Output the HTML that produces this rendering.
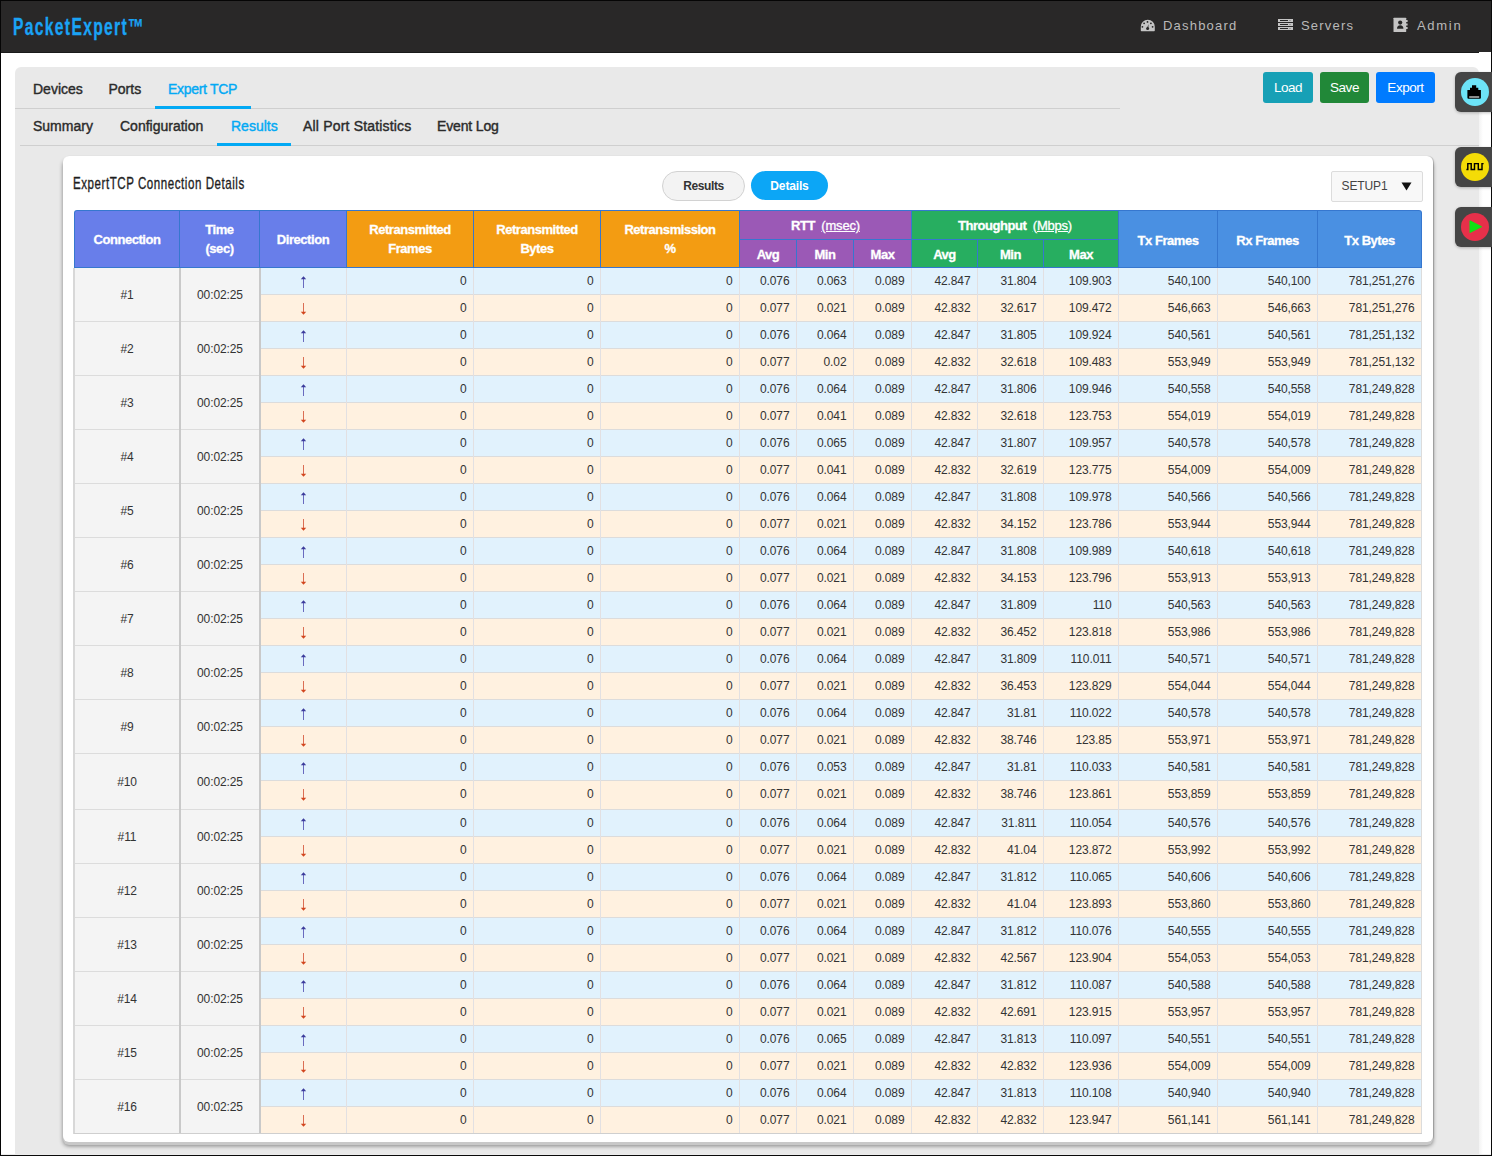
<!DOCTYPE html><html><head><meta charset="utf-8"><style>
html,body{margin:0;padding:0;}
body{width:1492px;height:1156px;overflow:hidden;position:relative;background:#fff;font-family:"Liberation Sans",sans-serif;}
body div{position:absolute;}
</style></head><body>
<div style="left:0px;top:0px;width:1492px;height:52px;background:#292828;"></div>
<div style="left:0px;top:52px;width:1492px;height:1px;background:#1a1a1a;"></div>
<div style="top:12.03px;font-size:23px;line-height:30px;color:#1aa3f5;font-weight:700;letter-spacing:1.95px;white-space:nowrap;left:13px;transform:scaleX(0.68);transform-origin:0 0;-webkit-text-stroke:0.3px currentColor;">PacketExpert™</div>
<div style="top:17.00px;font-size:13px;line-height:17px;color:#b9b9b9;font-weight:400;letter-spacing:1.2px;white-space:nowrap;left:1163px;">Dashboard</div>
<div style="top:17.00px;font-size:13px;line-height:17px;color:#b9b9b9;font-weight:400;letter-spacing:1.2px;white-space:nowrap;left:1301px;">Servers</div>
<div style="top:17.00px;font-size:13px;line-height:17px;color:#b9b9b9;font-weight:400;letter-spacing:1.7px;white-space:nowrap;left:1417px;">Admin</div>
<svg style="position:absolute;left:1136px;top:14px" width="24" height="24" viewBox="0 0 24 24">
<path d="M4.8 12.8 A7 7 0 0 1 18.8 12.8 V16.6 Q18.8 17.3 18.1 17.3 H5.5 Q4.8 17.3 4.8 16.6 Z" fill="#c4c4c4"/>
<g fill="#262626"><circle cx="11.5" cy="7.9" r="0.9"/><circle cx="8.1" cy="9.3" r="0.9"/><circle cx="14.9" cy="9.3" r="0.9"/><circle cx="6.4" cy="12.8" r="0.9"/><circle cx="16.6" cy="12.8" r="0.9"/>
<path d="M11.0 14.3 L12.6 10.0 L12.3 14.5 Z"/><circle cx="11.6" cy="14.5" r="1.5"/></g>
</svg>
<svg style="position:absolute;left:1278px;top:19px" width="15" height="11" viewBox="0 0 15 11">
<g fill="#c4c4c4"><rect x="0" y="0" width="15" height="3"/><rect x="0" y="4" width="15" height="3"/><rect x="0" y="8" width="15" height="3"/></g>
<g fill="#262626"><rect x="2" y="1" width="8" height="1"/><rect x="2" y="5" width="8" height="1"/><rect x="2" y="9" width="8" height="1"/>
<rect x="11.5" y="1" width="1" height="1" opacity=".5"/><rect x="11.5" y="5" width="1" height="1" opacity=".5"/><rect x="11.5" y="9" width="1" height="1" opacity=".5"/></g>
</svg>
<svg style="position:absolute;left:1393px;top:17px" width="16" height="16" viewBox="0 0 16 16">
<rect x="0.5" y="0.7" width="12.7" height="14.3" rx="0.6" fill="#c4c4c4"/>
<g fill="#c4c4c4"><rect x="13" y="3" width="1.6" height="2"/><rect x="13" y="6.5" width="1.6" height="2"/><rect x="13" y="10" width="1.6" height="2"/></g>
<circle cx="7.2" cy="5.6" r="2.1" fill="#262626"/><path d="M4 11.8 Q4 8.3 7.2 8.3 Q10.4 8.3 10.4 11.8 Z" fill="#262626"/>
</svg>
<div style="left:15px;top:67px;width:1464px;height:1200px;background:#e9e9e9;border-radius:6px 6px 0 0;"></div>
<div style="left:15px;top:108px;width:1105px;height:1px;background:#cfcfcf;"></div>
<div style="left:20px;top:145px;width:1459px;height:1px;background:#cfcfcf;"></div>
<div style="top:80.15px;font-size:14px;line-height:18px;color:#2b2b2b;font-weight:400;letter-spacing:0px;white-space:nowrap;left:33px;-webkit-text-stroke:0.4px currentColor;">Devices</div>
<div style="top:80.15px;font-size:14px;line-height:18px;color:#2b2b2b;font-weight:400;letter-spacing:0px;white-space:nowrap;left:108.5px;-webkit-text-stroke:0.4px currentColor;">Ports</div>
<div style="top:80.15px;font-size:14px;line-height:18px;color:#03a9f4;font-weight:400;letter-spacing:-0.3px;white-space:nowrap;left:168px;-webkit-text-stroke:0.4px currentColor;">Expert TCP</div>
<div style="left:155px;top:106px;width:96px;height:3px;background:#03a9f4;"></div>
<div style="top:117.15px;font-size:14px;line-height:18px;color:#2b2b2b;font-weight:400;letter-spacing:0px;white-space:nowrap;left:33px;-webkit-text-stroke:0.4px currentColor;">Summary</div>
<div style="top:117.15px;font-size:14px;line-height:18px;color:#2b2b2b;font-weight:400;letter-spacing:0px;white-space:nowrap;left:120px;-webkit-text-stroke:0.4px currentColor;">Configuration</div>
<div style="top:117.15px;font-size:14px;line-height:18px;color:#03a9f4;font-weight:400;letter-spacing:0px;white-space:nowrap;left:231px;-webkit-text-stroke:0.4px currentColor;">Results</div>
<div style="top:117.15px;font-size:14px;line-height:18px;color:#2b2b2b;font-weight:400;letter-spacing:0.18px;white-space:nowrap;left:303px;-webkit-text-stroke:0.4px currentColor;">All Port Statistics</div>
<div style="top:117.15px;font-size:14px;line-height:18px;color:#2b2b2b;font-weight:400;letter-spacing:-0.15px;white-space:nowrap;left:437px;-webkit-text-stroke:0.4px currentColor;">Event Log</div>
<div style="left:217px;top:143px;width:74px;height:3px;background:#03a9f4;"></div>
<div style="left:1263px;top:72px;width:50px;height:31px;background:#17a0b6;border-radius:3px;"></div>
<div style="left:1320px;top:72px;width:49px;height:31px;background:#218838;border-radius:3px;"></div>
<div style="left:1376px;top:72px;width:59px;height:31px;background:#007bff;border-radius:3px;"></div>
<div style="top:78.82px;font-size:13.5px;line-height:18px;color:#fff;font-weight:400;letter-spacing:-0.45px;white-space:nowrap;left:888px;width:800px;text-align:center;">Load</div>
<div style="top:78.82px;font-size:13.5px;line-height:18px;color:#fff;font-weight:400;letter-spacing:-0.45px;white-space:nowrap;left:944.5px;width:800px;text-align:center;">Save</div>
<div style="top:78.82px;font-size:13.5px;line-height:18px;color:#fff;font-weight:400;letter-spacing:-0.45px;white-space:nowrap;left:1005.5px;width:800px;text-align:center;">Export</div>
<div style="left:1479px;top:52px;width:12px;height:1104px;background:#ffffff;"></div>
<div style="left:1479px;top:75px;width:4px;height:1081px;background:linear-gradient(to right,#f3f3f3,#fff);"></div>
<div style="left:1491px;top:0px;width:1px;height:1156px;background:#0a0a0a;"></div>
<div style="left:0px;top:0px;width:1px;height:1156px;background:#050505;"></div>
<div style="left:1px;top:1154px;width:1490px;height:1px;background:#ececec;"></div>
<div style="left:0px;top:1155px;width:1492px;height:1px;background:#0a0a0a;"></div>
<div style="left:0px;top:0px;width:1492px;height:1px;background:#050505;"></div>
<div style="left:1455px;top:72px;width:40px;height:40px;background:#454545;border-radius:6px 0 0 6px;box-shadow:0 1px 3px rgba(0,0,0,.25);"></div>
<div style="left:1461px;top:78px;width:28px;height:28px;border-radius:50%;background:#6de3f7;"></div>
<svg style="position:absolute;left:1467px;top:85px" width="14" height="14" viewBox="0 0 14 14"><path d="M5 0.3 H9.2 V2.8 H11.3 V5.1 H13.9 V12.8 Q13.9 13.8 12.9 13.8 H1.4 Q0.4 13.8 0.4 12.8 V5.1 H3 V2.8 H5 Z" fill="#000"/><rect x="2.2" y="11" width="10" height="2" fill="#8a8a8a"/></svg>
<div style="left:1455px;top:147px;width:40px;height:40px;background:#454545;border-radius:6px 0 0 6px;box-shadow:0 1px 3px rgba(0,0,0,.25);"></div>
<div style="left:1461px;top:153px;width:28px;height:28px;border-radius:50%;background:#f4dc07;"></div>
<svg style="position:absolute;left:1466px;top:160px" width="18" height="12" viewBox="0 0 18 12"><path d="M0.4 9.4 H1.8 V3.6 H5.2 V9.4 H8.5 V3.6 H12.3 V9.4 H16 V3.6 H17.6" stroke="#000" stroke-width="1.45" fill="none" stroke-linejoin="miter"/></svg>
<div style="left:1455px;top:207px;width:40px;height:40px;background:#454545;border-radius:6px 0 0 6px;box-shadow:0 1px 3px rgba(0,0,0,.25);"></div>
<div style="left:1461px;top:213px;width:28px;height:28px;border-radius:50%;background:#e6304a;"></div>
<svg style="position:absolute;left:1468px;top:219px" width="16" height="16" viewBox="0 0 16 16"><path d="M1.5 2.2 Q1.5 1.1 2.5 1.6 L13.6 7.2 Q14.4 7.7 13.6 8.2 L2.5 13.8 Q1.5 14.3 1.5 13.2 Z" fill="#0fe014"/></svg>
<div style="left:63px;top:156px;width:1370px;height:986px;background:#fff;border-radius:6px;box-shadow:0 3px 0 0 #c8c8c8, 0 4px 4px 0 rgba(0,0,0,.45), 1px 0 1px rgba(0,0,0,.18);"></div>
<div style="top:172.61px;font-size:17px;line-height:22px;color:#1e1e1e;font-weight:400;letter-spacing:0.8px;white-space:nowrap;left:73px;transform:scaleX(0.68);transform-origin:0 0;-webkit-text-stroke:0.35px currentColor;">ExpertTCP Connection Details</div>
<div style="left:662px;top:171px;width:81px;height:28px;background:#f3f3f3;border:1px solid #d2d2d2;border-radius:15px;"></div>
<div style="left:751px;top:171px;width:77px;height:29px;background:#0ca6f6;border-radius:15px;"></div>
<div style="top:177.84px;font-size:12px;line-height:16px;color:#333;font-weight:700;letter-spacing:-0.4px;white-space:nowrap;left:303.5px;width:800px;text-align:center;">Results</div>
<div style="top:177.84px;font-size:12px;line-height:16px;color:#fff;font-weight:700;letter-spacing:-0.15px;white-space:nowrap;left:389.5px;width:800px;text-align:center;">Details</div>
<div style="left:1331px;top:171px;width:90px;height:29px;background:#f8f8f8;border:1px solid #dcdcdc;border-radius:2px;"></div>
<div style="top:178.34px;font-size:12px;line-height:16px;color:#444;font-weight:400;letter-spacing:-0.1px;white-space:nowrap;left:1341.5px;">SETUP1</div>
<svg style="position:absolute;left:1401px;top:182px" width="11" height="9" viewBox="0 0 11 9"><path d="M0.5 0.5 H10.5 L5.5 8.5 Z" fill="#111"/></svg>
<div style="left:74px;top:210px;width:1348px;height:58px;background:#3677cf;border-radius:3px 3px 0 0;"></div>
<div style="left:75px;top:211px;width:104px;height:56px;background:#687eea;border-top-left-radius:2px;"></div>
<div style="left:180px;top:211px;width:79px;height:56px;background:#687eea;"></div>
<div style="left:260px;top:211px;width:86px;height:56px;background:#687eea;"></div>
<div style="left:347px;top:211px;width:126px;height:56px;background:#f39c12;"></div>
<div style="left:474px;top:211px;width:126px;height:56px;background:#f39c12;"></div>
<div style="left:601px;top:211px;width:138px;height:56px;background:#f39c12;"></div>
<div style="left:1119px;top:211px;width:98px;height:56px;background:#4a90e2;"></div>
<div style="left:1218px;top:211px;width:99px;height:56px;background:#4a90e2;"></div>
<div style="left:1318px;top:211px;width:103px;height:56px;background:#4a90e2;border-top-right-radius:2px;"></div>
<div style="left:740px;top:211px;width:171px;height:28px;background:#9b59b6;"></div>
<div style="left:912px;top:211px;width:206px;height:28px;background:#27ae60;"></div>
<div style="left:740px;top:240px;width:56px;height:27px;background:#9b59b6;"></div>
<div style="left:797px;top:240px;width:56px;height:27px;background:#9b59b6;"></div>
<div style="left:854px;top:240px;width:57px;height:27px;background:#9b59b6;"></div>
<div style="left:912px;top:240px;width:65px;height:27px;background:#27ae60;"></div>
<div style="left:978px;top:240px;width:65px;height:27px;background:#27ae60;"></div>
<div style="left:1044px;top:240px;width:74px;height:27px;background:#27ae60;"></div>
<div style="top:231.30px;font-size:13px;line-height:17px;color:#fff;font-weight:700;letter-spacing:-0.45px;white-space:nowrap;left:-273.0px;width:800px;text-align:center;-webkit-text-stroke:0.3px currentColor;">Connection</div>
<div style="top:221.40px;font-size:13px;line-height:17px;color:#fff;font-weight:700;letter-spacing:-0.45px;white-space:nowrap;left:-180.5px;width:800px;text-align:center;-webkit-text-stroke:0.3px currentColor;">Time</div>
<div style="top:240.40px;font-size:13px;line-height:17px;color:#fff;font-weight:700;letter-spacing:-0.45px;white-space:nowrap;left:-180.5px;width:800px;text-align:center;-webkit-text-stroke:0.3px currentColor;">(sec)</div>
<div style="top:231.30px;font-size:13px;line-height:17px;color:#fff;font-weight:700;letter-spacing:-0.45px;white-space:nowrap;left:-97.0px;width:800px;text-align:center;-webkit-text-stroke:0.3px currentColor;">Direction</div>
<div style="top:221.20px;font-size:13px;line-height:17px;color:#fff;font-weight:700;letter-spacing:-0.45px;white-space:nowrap;left:10.0px;width:800px;text-align:center;-webkit-text-stroke:0.3px currentColor;">Retransmitted</div>
<div style="top:240.30px;font-size:13px;line-height:17px;color:#fff;font-weight:700;letter-spacing:-0.45px;white-space:nowrap;left:10.0px;width:800px;text-align:center;-webkit-text-stroke:0.3px currentColor;">Frames</div>
<div style="top:221.20px;font-size:13px;line-height:17px;color:#fff;font-weight:700;letter-spacing:-0.45px;white-space:nowrap;left:137.0px;width:800px;text-align:center;-webkit-text-stroke:0.3px currentColor;">Retransmitted</div>
<div style="top:240.30px;font-size:13px;line-height:17px;color:#fff;font-weight:700;letter-spacing:-0.45px;white-space:nowrap;left:137.0px;width:800px;text-align:center;-webkit-text-stroke:0.3px currentColor;">Bytes</div>
<div style="top:221.20px;font-size:13px;line-height:17px;color:#fff;font-weight:700;letter-spacing:-0.45px;white-space:nowrap;left:270.0px;width:800px;text-align:center;-webkit-text-stroke:0.3px currentColor;">Retransmission</div>
<div style="top:240.30px;font-size:13px;line-height:17px;color:#fff;font-weight:700;letter-spacing:-0.45px;white-space:nowrap;left:270.0px;width:800px;text-align:center;-webkit-text-stroke:0.3px currentColor;">%</div>
<div style="top:216.80px;font-size:13px;line-height:17px;color:#fff;font-weight:700;letter-spacing:-0.45px;white-space:nowrap;left:425.5px;width:800px;text-align:center;-webkit-text-stroke:0.3px currentColor;">RTT&nbsp;&nbsp;<span style="font-weight:400;text-decoration:underline;letter-spacing:-0.2px">(msec)</span></div>
<div style="top:216.80px;font-size:13px;line-height:17px;color:#fff;font-weight:700;letter-spacing:-0.45px;white-space:nowrap;left:615.0px;width:800px;text-align:center;-webkit-text-stroke:0.3px currentColor;">Throughput&nbsp;&nbsp;<span style="font-weight:400;text-decoration:underline;letter-spacing:-0.2px">(Mbps)</span></div>
<div style="top:245.60px;font-size:13px;line-height:17px;color:#fff;font-weight:700;letter-spacing:-0.45px;white-space:nowrap;left:368.0px;width:800px;text-align:center;-webkit-text-stroke:0.3px currentColor;">Avg</div>
<div style="top:245.60px;font-size:13px;line-height:17px;color:#fff;font-weight:700;letter-spacing:-0.45px;white-space:nowrap;left:425.0px;width:800px;text-align:center;-webkit-text-stroke:0.3px currentColor;">Min</div>
<div style="top:245.60px;font-size:13px;line-height:17px;color:#fff;font-weight:700;letter-spacing:-0.45px;white-space:nowrap;left:482.5px;width:800px;text-align:center;-webkit-text-stroke:0.3px currentColor;">Max</div>
<div style="top:245.60px;font-size:13px;line-height:17px;color:#fff;font-weight:700;letter-spacing:-0.45px;white-space:nowrap;left:544.5px;width:800px;text-align:center;-webkit-text-stroke:0.3px currentColor;">Avg</div>
<div style="top:245.60px;font-size:13px;line-height:17px;color:#fff;font-weight:700;letter-spacing:-0.45px;white-space:nowrap;left:610.5px;width:800px;text-align:center;-webkit-text-stroke:0.3px currentColor;">Min</div>
<div style="top:245.60px;font-size:13px;line-height:17px;color:#fff;font-weight:700;letter-spacing:-0.45px;white-space:nowrap;left:681.0px;width:800px;text-align:center;-webkit-text-stroke:0.3px currentColor;">Max</div>
<div style="top:232.00px;font-size:13px;line-height:17px;color:#fff;font-weight:700;letter-spacing:-0.45px;white-space:nowrap;left:768.0px;width:800px;text-align:center;-webkit-text-stroke:0.3px currentColor;">Tx Frames</div>
<div style="top:232.00px;font-size:13px;line-height:17px;color:#fff;font-weight:700;letter-spacing:-0.45px;white-space:nowrap;left:867.5px;width:800px;text-align:center;-webkit-text-stroke:0.3px currentColor;">Rx Frames</div>
<div style="top:232.00px;font-size:13px;line-height:17px;color:#fff;font-weight:700;letter-spacing:-0.45px;white-space:nowrap;left:969.5px;width:800px;text-align:center;-webkit-text-stroke:0.3px currentColor;">Tx Bytes</div>
<div style="left:74px;top:268px;width:1348px;height:866px;background:#dcdcdc;"></div>
<div style="left:75px;top:268px;width:104px;height:53px;background:#f4f4f4;"></div>
<div style="left:181px;top:268px;width:78px;height:53px;background:#f4f4f4;"></div>
<div style="top:287.14px;font-size:12px;line-height:16px;color:#333;font-weight:400;letter-spacing:-0.1px;white-space:nowrap;left:-273.0px;width:800px;text-align:center;">#1</div>
<div style="top:287.14px;font-size:12px;line-height:16px;color:#333;font-weight:400;letter-spacing:-0.1px;white-space:nowrap;left:-180.0px;width:800px;text-align:center;">00:02:25</div>
<div style="left:261px;top:268px;width:85px;height:26px;background:#e1f2fd;"></div>
<div style="left:300px;top:276px;width:7px;height:12px;"><svg width="7" height="12" viewBox="0 0 7 12" style="display:block"><path d="M3.5 2.5 V12" stroke="#6262bc" stroke-width="0.95"/><path d="M0.8 3.2 L3.5 0.2 L6.2 3.2 Z" fill="#3c3c9c"/></svg></div>
<div style="left:347px;top:268px;width:126px;height:26px;background:#e1f2fd;"></div>
<div style="top:272.84px;font-size:12px;line-height:16px;color:#333;font-weight:400;letter-spacing:-0.1px;white-space:nowrap;left:-333.5px;width:800px;text-align:right;">0</div>
<div style="left:474px;top:268px;width:126px;height:26px;background:#e1f2fd;"></div>
<div style="top:272.84px;font-size:12px;line-height:16px;color:#333;font-weight:400;letter-spacing:-0.1px;white-space:nowrap;left:-206.5px;width:800px;text-align:right;">0</div>
<div style="left:601px;top:268px;width:138px;height:26px;background:#e1f2fd;"></div>
<div style="top:272.84px;font-size:12px;line-height:16px;color:#333;font-weight:400;letter-spacing:-0.1px;white-space:nowrap;left:-67.5px;width:800px;text-align:right;">0</div>
<div style="left:740px;top:268px;width:56px;height:26px;background:#e1f2fd;"></div>
<div style="top:272.84px;font-size:12px;line-height:16px;color:#333;font-weight:400;letter-spacing:-0.1px;white-space:nowrap;left:-10.5px;width:800px;text-align:right;">0.076</div>
<div style="left:797px;top:268px;width:56px;height:26px;background:#e1f2fd;"></div>
<div style="top:272.84px;font-size:12px;line-height:16px;color:#333;font-weight:400;letter-spacing:-0.1px;white-space:nowrap;left:46.5px;width:800px;text-align:right;">0.063</div>
<div style="left:854px;top:268px;width:57px;height:26px;background:#e1f2fd;"></div>
<div style="top:272.84px;font-size:12px;line-height:16px;color:#333;font-weight:400;letter-spacing:-0.1px;white-space:nowrap;left:104.5px;width:800px;text-align:right;">0.089</div>
<div style="left:912px;top:268px;width:65px;height:26px;background:#e1f2fd;"></div>
<div style="top:272.84px;font-size:12px;line-height:16px;color:#333;font-weight:400;letter-spacing:-0.1px;white-space:nowrap;left:170.5px;width:800px;text-align:right;">42.847</div>
<div style="left:978px;top:268px;width:65px;height:26px;background:#e1f2fd;"></div>
<div style="top:272.84px;font-size:12px;line-height:16px;color:#333;font-weight:400;letter-spacing:-0.1px;white-space:nowrap;left:236.5px;width:800px;text-align:right;">31.804</div>
<div style="left:1044px;top:268px;width:74px;height:26px;background:#e1f2fd;"></div>
<div style="top:272.84px;font-size:12px;line-height:16px;color:#333;font-weight:400;letter-spacing:-0.1px;white-space:nowrap;left:311.5px;width:800px;text-align:right;">109.903</div>
<div style="left:1119px;top:268px;width:98px;height:26px;background:#e1f2fd;"></div>
<div style="top:272.84px;font-size:12px;line-height:16px;color:#333;font-weight:400;letter-spacing:-0.1px;white-space:nowrap;left:410.5px;width:800px;text-align:right;">540,100</div>
<div style="left:1218px;top:268px;width:99px;height:26px;background:#e1f2fd;"></div>
<div style="top:272.84px;font-size:12px;line-height:16px;color:#333;font-weight:400;letter-spacing:-0.1px;white-space:nowrap;left:510.5px;width:800px;text-align:right;">540,100</div>
<div style="left:1318px;top:268px;width:103px;height:26px;background:#e1f2fd;"></div>
<div style="top:272.84px;font-size:12px;line-height:16px;color:#333;font-weight:400;letter-spacing:-0.1px;white-space:nowrap;left:614.5px;width:800px;text-align:right;">781,251,276</div>
<div style="left:261px;top:295px;width:85px;height:26px;background:#fff1e0;"></div>
<div style="left:300px;top:303px;width:7px;height:12px;"><svg width="7" height="12" viewBox="0 0 7 12" style="display:block"><path d="M3.5 0 V9.5" stroke="#d9664c" stroke-width="0.95"/><path d="M0.8 8.8 L3.5 11.8 L6.2 8.8 Z" fill="#d2461e"/></svg></div>
<div style="left:347px;top:295px;width:126px;height:26px;background:#fff1e0;"></div>
<div style="top:299.84px;font-size:12px;line-height:16px;color:#333;font-weight:400;letter-spacing:-0.1px;white-space:nowrap;left:-333.5px;width:800px;text-align:right;">0</div>
<div style="left:474px;top:295px;width:126px;height:26px;background:#fff1e0;"></div>
<div style="top:299.84px;font-size:12px;line-height:16px;color:#333;font-weight:400;letter-spacing:-0.1px;white-space:nowrap;left:-206.5px;width:800px;text-align:right;">0</div>
<div style="left:601px;top:295px;width:138px;height:26px;background:#fff1e0;"></div>
<div style="top:299.84px;font-size:12px;line-height:16px;color:#333;font-weight:400;letter-spacing:-0.1px;white-space:nowrap;left:-67.5px;width:800px;text-align:right;">0</div>
<div style="left:740px;top:295px;width:56px;height:26px;background:#fff1e0;"></div>
<div style="top:299.84px;font-size:12px;line-height:16px;color:#333;font-weight:400;letter-spacing:-0.1px;white-space:nowrap;left:-10.5px;width:800px;text-align:right;">0.077</div>
<div style="left:797px;top:295px;width:56px;height:26px;background:#fff1e0;"></div>
<div style="top:299.84px;font-size:12px;line-height:16px;color:#333;font-weight:400;letter-spacing:-0.1px;white-space:nowrap;left:46.5px;width:800px;text-align:right;">0.021</div>
<div style="left:854px;top:295px;width:57px;height:26px;background:#fff1e0;"></div>
<div style="top:299.84px;font-size:12px;line-height:16px;color:#333;font-weight:400;letter-spacing:-0.1px;white-space:nowrap;left:104.5px;width:800px;text-align:right;">0.089</div>
<div style="left:912px;top:295px;width:65px;height:26px;background:#fff1e0;"></div>
<div style="top:299.84px;font-size:12px;line-height:16px;color:#333;font-weight:400;letter-spacing:-0.1px;white-space:nowrap;left:170.5px;width:800px;text-align:right;">42.832</div>
<div style="left:978px;top:295px;width:65px;height:26px;background:#fff1e0;"></div>
<div style="top:299.84px;font-size:12px;line-height:16px;color:#333;font-weight:400;letter-spacing:-0.1px;white-space:nowrap;left:236.5px;width:800px;text-align:right;">32.617</div>
<div style="left:1044px;top:295px;width:74px;height:26px;background:#fff1e0;"></div>
<div style="top:299.84px;font-size:12px;line-height:16px;color:#333;font-weight:400;letter-spacing:-0.1px;white-space:nowrap;left:311.5px;width:800px;text-align:right;">109.472</div>
<div style="left:1119px;top:295px;width:98px;height:26px;background:#fff1e0;"></div>
<div style="top:299.84px;font-size:12px;line-height:16px;color:#333;font-weight:400;letter-spacing:-0.1px;white-space:nowrap;left:410.5px;width:800px;text-align:right;">546,663</div>
<div style="left:1218px;top:295px;width:99px;height:26px;background:#fff1e0;"></div>
<div style="top:299.84px;font-size:12px;line-height:16px;color:#333;font-weight:400;letter-spacing:-0.1px;white-space:nowrap;left:510.5px;width:800px;text-align:right;">546,663</div>
<div style="left:1318px;top:295px;width:103px;height:26px;background:#fff1e0;"></div>
<div style="top:299.84px;font-size:12px;line-height:16px;color:#333;font-weight:400;letter-spacing:-0.1px;white-space:nowrap;left:614.5px;width:800px;text-align:right;">781,251,276</div>
<div style="left:75px;top:322px;width:104px;height:53px;background:#f4f4f4;"></div>
<div style="left:181px;top:322px;width:78px;height:53px;background:#f4f4f4;"></div>
<div style="top:341.14px;font-size:12px;line-height:16px;color:#333;font-weight:400;letter-spacing:-0.1px;white-space:nowrap;left:-273.0px;width:800px;text-align:center;">#2</div>
<div style="top:341.14px;font-size:12px;line-height:16px;color:#333;font-weight:400;letter-spacing:-0.1px;white-space:nowrap;left:-180.0px;width:800px;text-align:center;">00:02:25</div>
<div style="left:261px;top:322px;width:85px;height:26px;background:#e1f2fd;"></div>
<div style="left:300px;top:330px;width:7px;height:12px;"><svg width="7" height="12" viewBox="0 0 7 12" style="display:block"><path d="M3.5 2.5 V12" stroke="#6262bc" stroke-width="0.95"/><path d="M0.8 3.2 L3.5 0.2 L6.2 3.2 Z" fill="#3c3c9c"/></svg></div>
<div style="left:347px;top:322px;width:126px;height:26px;background:#e1f2fd;"></div>
<div style="top:326.84px;font-size:12px;line-height:16px;color:#333;font-weight:400;letter-spacing:-0.1px;white-space:nowrap;left:-333.5px;width:800px;text-align:right;">0</div>
<div style="left:474px;top:322px;width:126px;height:26px;background:#e1f2fd;"></div>
<div style="top:326.84px;font-size:12px;line-height:16px;color:#333;font-weight:400;letter-spacing:-0.1px;white-space:nowrap;left:-206.5px;width:800px;text-align:right;">0</div>
<div style="left:601px;top:322px;width:138px;height:26px;background:#e1f2fd;"></div>
<div style="top:326.84px;font-size:12px;line-height:16px;color:#333;font-weight:400;letter-spacing:-0.1px;white-space:nowrap;left:-67.5px;width:800px;text-align:right;">0</div>
<div style="left:740px;top:322px;width:56px;height:26px;background:#e1f2fd;"></div>
<div style="top:326.84px;font-size:12px;line-height:16px;color:#333;font-weight:400;letter-spacing:-0.1px;white-space:nowrap;left:-10.5px;width:800px;text-align:right;">0.076</div>
<div style="left:797px;top:322px;width:56px;height:26px;background:#e1f2fd;"></div>
<div style="top:326.84px;font-size:12px;line-height:16px;color:#333;font-weight:400;letter-spacing:-0.1px;white-space:nowrap;left:46.5px;width:800px;text-align:right;">0.064</div>
<div style="left:854px;top:322px;width:57px;height:26px;background:#e1f2fd;"></div>
<div style="top:326.84px;font-size:12px;line-height:16px;color:#333;font-weight:400;letter-spacing:-0.1px;white-space:nowrap;left:104.5px;width:800px;text-align:right;">0.089</div>
<div style="left:912px;top:322px;width:65px;height:26px;background:#e1f2fd;"></div>
<div style="top:326.84px;font-size:12px;line-height:16px;color:#333;font-weight:400;letter-spacing:-0.1px;white-space:nowrap;left:170.5px;width:800px;text-align:right;">42.847</div>
<div style="left:978px;top:322px;width:65px;height:26px;background:#e1f2fd;"></div>
<div style="top:326.84px;font-size:12px;line-height:16px;color:#333;font-weight:400;letter-spacing:-0.1px;white-space:nowrap;left:236.5px;width:800px;text-align:right;">31.805</div>
<div style="left:1044px;top:322px;width:74px;height:26px;background:#e1f2fd;"></div>
<div style="top:326.84px;font-size:12px;line-height:16px;color:#333;font-weight:400;letter-spacing:-0.1px;white-space:nowrap;left:311.5px;width:800px;text-align:right;">109.924</div>
<div style="left:1119px;top:322px;width:98px;height:26px;background:#e1f2fd;"></div>
<div style="top:326.84px;font-size:12px;line-height:16px;color:#333;font-weight:400;letter-spacing:-0.1px;white-space:nowrap;left:410.5px;width:800px;text-align:right;">540,561</div>
<div style="left:1218px;top:322px;width:99px;height:26px;background:#e1f2fd;"></div>
<div style="top:326.84px;font-size:12px;line-height:16px;color:#333;font-weight:400;letter-spacing:-0.1px;white-space:nowrap;left:510.5px;width:800px;text-align:right;">540,561</div>
<div style="left:1318px;top:322px;width:103px;height:26px;background:#e1f2fd;"></div>
<div style="top:326.84px;font-size:12px;line-height:16px;color:#333;font-weight:400;letter-spacing:-0.1px;white-space:nowrap;left:614.5px;width:800px;text-align:right;">781,251,132</div>
<div style="left:261px;top:349px;width:85px;height:26px;background:#fff1e0;"></div>
<div style="left:300px;top:357px;width:7px;height:12px;"><svg width="7" height="12" viewBox="0 0 7 12" style="display:block"><path d="M3.5 0 V9.5" stroke="#d9664c" stroke-width="0.95"/><path d="M0.8 8.8 L3.5 11.8 L6.2 8.8 Z" fill="#d2461e"/></svg></div>
<div style="left:347px;top:349px;width:126px;height:26px;background:#fff1e0;"></div>
<div style="top:353.84px;font-size:12px;line-height:16px;color:#333;font-weight:400;letter-spacing:-0.1px;white-space:nowrap;left:-333.5px;width:800px;text-align:right;">0</div>
<div style="left:474px;top:349px;width:126px;height:26px;background:#fff1e0;"></div>
<div style="top:353.84px;font-size:12px;line-height:16px;color:#333;font-weight:400;letter-spacing:-0.1px;white-space:nowrap;left:-206.5px;width:800px;text-align:right;">0</div>
<div style="left:601px;top:349px;width:138px;height:26px;background:#fff1e0;"></div>
<div style="top:353.84px;font-size:12px;line-height:16px;color:#333;font-weight:400;letter-spacing:-0.1px;white-space:nowrap;left:-67.5px;width:800px;text-align:right;">0</div>
<div style="left:740px;top:349px;width:56px;height:26px;background:#fff1e0;"></div>
<div style="top:353.84px;font-size:12px;line-height:16px;color:#333;font-weight:400;letter-spacing:-0.1px;white-space:nowrap;left:-10.5px;width:800px;text-align:right;">0.077</div>
<div style="left:797px;top:349px;width:56px;height:26px;background:#fff1e0;"></div>
<div style="top:353.84px;font-size:12px;line-height:16px;color:#333;font-weight:400;letter-spacing:-0.1px;white-space:nowrap;left:46.5px;width:800px;text-align:right;">0.02</div>
<div style="left:854px;top:349px;width:57px;height:26px;background:#fff1e0;"></div>
<div style="top:353.84px;font-size:12px;line-height:16px;color:#333;font-weight:400;letter-spacing:-0.1px;white-space:nowrap;left:104.5px;width:800px;text-align:right;">0.089</div>
<div style="left:912px;top:349px;width:65px;height:26px;background:#fff1e0;"></div>
<div style="top:353.84px;font-size:12px;line-height:16px;color:#333;font-weight:400;letter-spacing:-0.1px;white-space:nowrap;left:170.5px;width:800px;text-align:right;">42.832</div>
<div style="left:978px;top:349px;width:65px;height:26px;background:#fff1e0;"></div>
<div style="top:353.84px;font-size:12px;line-height:16px;color:#333;font-weight:400;letter-spacing:-0.1px;white-space:nowrap;left:236.5px;width:800px;text-align:right;">32.618</div>
<div style="left:1044px;top:349px;width:74px;height:26px;background:#fff1e0;"></div>
<div style="top:353.84px;font-size:12px;line-height:16px;color:#333;font-weight:400;letter-spacing:-0.1px;white-space:nowrap;left:311.5px;width:800px;text-align:right;">109.483</div>
<div style="left:1119px;top:349px;width:98px;height:26px;background:#fff1e0;"></div>
<div style="top:353.84px;font-size:12px;line-height:16px;color:#333;font-weight:400;letter-spacing:-0.1px;white-space:nowrap;left:410.5px;width:800px;text-align:right;">553,949</div>
<div style="left:1218px;top:349px;width:99px;height:26px;background:#fff1e0;"></div>
<div style="top:353.84px;font-size:12px;line-height:16px;color:#333;font-weight:400;letter-spacing:-0.1px;white-space:nowrap;left:510.5px;width:800px;text-align:right;">553,949</div>
<div style="left:1318px;top:349px;width:103px;height:26px;background:#fff1e0;"></div>
<div style="top:353.84px;font-size:12px;line-height:16px;color:#333;font-weight:400;letter-spacing:-0.1px;white-space:nowrap;left:614.5px;width:800px;text-align:right;">781,251,132</div>
<div style="left:75px;top:376px;width:104px;height:53px;background:#f4f4f4;"></div>
<div style="left:181px;top:376px;width:78px;height:53px;background:#f4f4f4;"></div>
<div style="top:395.14px;font-size:12px;line-height:16px;color:#333;font-weight:400;letter-spacing:-0.1px;white-space:nowrap;left:-273.0px;width:800px;text-align:center;">#3</div>
<div style="top:395.14px;font-size:12px;line-height:16px;color:#333;font-weight:400;letter-spacing:-0.1px;white-space:nowrap;left:-180.0px;width:800px;text-align:center;">00:02:25</div>
<div style="left:261px;top:376px;width:85px;height:26px;background:#e1f2fd;"></div>
<div style="left:300px;top:384px;width:7px;height:12px;"><svg width="7" height="12" viewBox="0 0 7 12" style="display:block"><path d="M3.5 2.5 V12" stroke="#6262bc" stroke-width="0.95"/><path d="M0.8 3.2 L3.5 0.2 L6.2 3.2 Z" fill="#3c3c9c"/></svg></div>
<div style="left:347px;top:376px;width:126px;height:26px;background:#e1f2fd;"></div>
<div style="top:380.84px;font-size:12px;line-height:16px;color:#333;font-weight:400;letter-spacing:-0.1px;white-space:nowrap;left:-333.5px;width:800px;text-align:right;">0</div>
<div style="left:474px;top:376px;width:126px;height:26px;background:#e1f2fd;"></div>
<div style="top:380.84px;font-size:12px;line-height:16px;color:#333;font-weight:400;letter-spacing:-0.1px;white-space:nowrap;left:-206.5px;width:800px;text-align:right;">0</div>
<div style="left:601px;top:376px;width:138px;height:26px;background:#e1f2fd;"></div>
<div style="top:380.84px;font-size:12px;line-height:16px;color:#333;font-weight:400;letter-spacing:-0.1px;white-space:nowrap;left:-67.5px;width:800px;text-align:right;">0</div>
<div style="left:740px;top:376px;width:56px;height:26px;background:#e1f2fd;"></div>
<div style="top:380.84px;font-size:12px;line-height:16px;color:#333;font-weight:400;letter-spacing:-0.1px;white-space:nowrap;left:-10.5px;width:800px;text-align:right;">0.076</div>
<div style="left:797px;top:376px;width:56px;height:26px;background:#e1f2fd;"></div>
<div style="top:380.84px;font-size:12px;line-height:16px;color:#333;font-weight:400;letter-spacing:-0.1px;white-space:nowrap;left:46.5px;width:800px;text-align:right;">0.064</div>
<div style="left:854px;top:376px;width:57px;height:26px;background:#e1f2fd;"></div>
<div style="top:380.84px;font-size:12px;line-height:16px;color:#333;font-weight:400;letter-spacing:-0.1px;white-space:nowrap;left:104.5px;width:800px;text-align:right;">0.089</div>
<div style="left:912px;top:376px;width:65px;height:26px;background:#e1f2fd;"></div>
<div style="top:380.84px;font-size:12px;line-height:16px;color:#333;font-weight:400;letter-spacing:-0.1px;white-space:nowrap;left:170.5px;width:800px;text-align:right;">42.847</div>
<div style="left:978px;top:376px;width:65px;height:26px;background:#e1f2fd;"></div>
<div style="top:380.84px;font-size:12px;line-height:16px;color:#333;font-weight:400;letter-spacing:-0.1px;white-space:nowrap;left:236.5px;width:800px;text-align:right;">31.806</div>
<div style="left:1044px;top:376px;width:74px;height:26px;background:#e1f2fd;"></div>
<div style="top:380.84px;font-size:12px;line-height:16px;color:#333;font-weight:400;letter-spacing:-0.1px;white-space:nowrap;left:311.5px;width:800px;text-align:right;">109.946</div>
<div style="left:1119px;top:376px;width:98px;height:26px;background:#e1f2fd;"></div>
<div style="top:380.84px;font-size:12px;line-height:16px;color:#333;font-weight:400;letter-spacing:-0.1px;white-space:nowrap;left:410.5px;width:800px;text-align:right;">540,558</div>
<div style="left:1218px;top:376px;width:99px;height:26px;background:#e1f2fd;"></div>
<div style="top:380.84px;font-size:12px;line-height:16px;color:#333;font-weight:400;letter-spacing:-0.1px;white-space:nowrap;left:510.5px;width:800px;text-align:right;">540,558</div>
<div style="left:1318px;top:376px;width:103px;height:26px;background:#e1f2fd;"></div>
<div style="top:380.84px;font-size:12px;line-height:16px;color:#333;font-weight:400;letter-spacing:-0.1px;white-space:nowrap;left:614.5px;width:800px;text-align:right;">781,249,828</div>
<div style="left:261px;top:403px;width:85px;height:26px;background:#fff1e0;"></div>
<div style="left:300px;top:411px;width:7px;height:12px;"><svg width="7" height="12" viewBox="0 0 7 12" style="display:block"><path d="M3.5 0 V9.5" stroke="#d9664c" stroke-width="0.95"/><path d="M0.8 8.8 L3.5 11.8 L6.2 8.8 Z" fill="#d2461e"/></svg></div>
<div style="left:347px;top:403px;width:126px;height:26px;background:#fff1e0;"></div>
<div style="top:407.84px;font-size:12px;line-height:16px;color:#333;font-weight:400;letter-spacing:-0.1px;white-space:nowrap;left:-333.5px;width:800px;text-align:right;">0</div>
<div style="left:474px;top:403px;width:126px;height:26px;background:#fff1e0;"></div>
<div style="top:407.84px;font-size:12px;line-height:16px;color:#333;font-weight:400;letter-spacing:-0.1px;white-space:nowrap;left:-206.5px;width:800px;text-align:right;">0</div>
<div style="left:601px;top:403px;width:138px;height:26px;background:#fff1e0;"></div>
<div style="top:407.84px;font-size:12px;line-height:16px;color:#333;font-weight:400;letter-spacing:-0.1px;white-space:nowrap;left:-67.5px;width:800px;text-align:right;">0</div>
<div style="left:740px;top:403px;width:56px;height:26px;background:#fff1e0;"></div>
<div style="top:407.84px;font-size:12px;line-height:16px;color:#333;font-weight:400;letter-spacing:-0.1px;white-space:nowrap;left:-10.5px;width:800px;text-align:right;">0.077</div>
<div style="left:797px;top:403px;width:56px;height:26px;background:#fff1e0;"></div>
<div style="top:407.84px;font-size:12px;line-height:16px;color:#333;font-weight:400;letter-spacing:-0.1px;white-space:nowrap;left:46.5px;width:800px;text-align:right;">0.041</div>
<div style="left:854px;top:403px;width:57px;height:26px;background:#fff1e0;"></div>
<div style="top:407.84px;font-size:12px;line-height:16px;color:#333;font-weight:400;letter-spacing:-0.1px;white-space:nowrap;left:104.5px;width:800px;text-align:right;">0.089</div>
<div style="left:912px;top:403px;width:65px;height:26px;background:#fff1e0;"></div>
<div style="top:407.84px;font-size:12px;line-height:16px;color:#333;font-weight:400;letter-spacing:-0.1px;white-space:nowrap;left:170.5px;width:800px;text-align:right;">42.832</div>
<div style="left:978px;top:403px;width:65px;height:26px;background:#fff1e0;"></div>
<div style="top:407.84px;font-size:12px;line-height:16px;color:#333;font-weight:400;letter-spacing:-0.1px;white-space:nowrap;left:236.5px;width:800px;text-align:right;">32.618</div>
<div style="left:1044px;top:403px;width:74px;height:26px;background:#fff1e0;"></div>
<div style="top:407.84px;font-size:12px;line-height:16px;color:#333;font-weight:400;letter-spacing:-0.1px;white-space:nowrap;left:311.5px;width:800px;text-align:right;">123.753</div>
<div style="left:1119px;top:403px;width:98px;height:26px;background:#fff1e0;"></div>
<div style="top:407.84px;font-size:12px;line-height:16px;color:#333;font-weight:400;letter-spacing:-0.1px;white-space:nowrap;left:410.5px;width:800px;text-align:right;">554,019</div>
<div style="left:1218px;top:403px;width:99px;height:26px;background:#fff1e0;"></div>
<div style="top:407.84px;font-size:12px;line-height:16px;color:#333;font-weight:400;letter-spacing:-0.1px;white-space:nowrap;left:510.5px;width:800px;text-align:right;">554,019</div>
<div style="left:1318px;top:403px;width:103px;height:26px;background:#fff1e0;"></div>
<div style="top:407.84px;font-size:12px;line-height:16px;color:#333;font-weight:400;letter-spacing:-0.1px;white-space:nowrap;left:614.5px;width:800px;text-align:right;">781,249,828</div>
<div style="left:75px;top:430px;width:104px;height:53px;background:#f4f4f4;"></div>
<div style="left:181px;top:430px;width:78px;height:53px;background:#f4f4f4;"></div>
<div style="top:449.14px;font-size:12px;line-height:16px;color:#333;font-weight:400;letter-spacing:-0.1px;white-space:nowrap;left:-273.0px;width:800px;text-align:center;">#4</div>
<div style="top:449.14px;font-size:12px;line-height:16px;color:#333;font-weight:400;letter-spacing:-0.1px;white-space:nowrap;left:-180.0px;width:800px;text-align:center;">00:02:25</div>
<div style="left:261px;top:430px;width:85px;height:26px;background:#e1f2fd;"></div>
<div style="left:300px;top:438px;width:7px;height:12px;"><svg width="7" height="12" viewBox="0 0 7 12" style="display:block"><path d="M3.5 2.5 V12" stroke="#6262bc" stroke-width="0.95"/><path d="M0.8 3.2 L3.5 0.2 L6.2 3.2 Z" fill="#3c3c9c"/></svg></div>
<div style="left:347px;top:430px;width:126px;height:26px;background:#e1f2fd;"></div>
<div style="top:434.84px;font-size:12px;line-height:16px;color:#333;font-weight:400;letter-spacing:-0.1px;white-space:nowrap;left:-333.5px;width:800px;text-align:right;">0</div>
<div style="left:474px;top:430px;width:126px;height:26px;background:#e1f2fd;"></div>
<div style="top:434.84px;font-size:12px;line-height:16px;color:#333;font-weight:400;letter-spacing:-0.1px;white-space:nowrap;left:-206.5px;width:800px;text-align:right;">0</div>
<div style="left:601px;top:430px;width:138px;height:26px;background:#e1f2fd;"></div>
<div style="top:434.84px;font-size:12px;line-height:16px;color:#333;font-weight:400;letter-spacing:-0.1px;white-space:nowrap;left:-67.5px;width:800px;text-align:right;">0</div>
<div style="left:740px;top:430px;width:56px;height:26px;background:#e1f2fd;"></div>
<div style="top:434.84px;font-size:12px;line-height:16px;color:#333;font-weight:400;letter-spacing:-0.1px;white-space:nowrap;left:-10.5px;width:800px;text-align:right;">0.076</div>
<div style="left:797px;top:430px;width:56px;height:26px;background:#e1f2fd;"></div>
<div style="top:434.84px;font-size:12px;line-height:16px;color:#333;font-weight:400;letter-spacing:-0.1px;white-space:nowrap;left:46.5px;width:800px;text-align:right;">0.065</div>
<div style="left:854px;top:430px;width:57px;height:26px;background:#e1f2fd;"></div>
<div style="top:434.84px;font-size:12px;line-height:16px;color:#333;font-weight:400;letter-spacing:-0.1px;white-space:nowrap;left:104.5px;width:800px;text-align:right;">0.089</div>
<div style="left:912px;top:430px;width:65px;height:26px;background:#e1f2fd;"></div>
<div style="top:434.84px;font-size:12px;line-height:16px;color:#333;font-weight:400;letter-spacing:-0.1px;white-space:nowrap;left:170.5px;width:800px;text-align:right;">42.847</div>
<div style="left:978px;top:430px;width:65px;height:26px;background:#e1f2fd;"></div>
<div style="top:434.84px;font-size:12px;line-height:16px;color:#333;font-weight:400;letter-spacing:-0.1px;white-space:nowrap;left:236.5px;width:800px;text-align:right;">31.807</div>
<div style="left:1044px;top:430px;width:74px;height:26px;background:#e1f2fd;"></div>
<div style="top:434.84px;font-size:12px;line-height:16px;color:#333;font-weight:400;letter-spacing:-0.1px;white-space:nowrap;left:311.5px;width:800px;text-align:right;">109.957</div>
<div style="left:1119px;top:430px;width:98px;height:26px;background:#e1f2fd;"></div>
<div style="top:434.84px;font-size:12px;line-height:16px;color:#333;font-weight:400;letter-spacing:-0.1px;white-space:nowrap;left:410.5px;width:800px;text-align:right;">540,578</div>
<div style="left:1218px;top:430px;width:99px;height:26px;background:#e1f2fd;"></div>
<div style="top:434.84px;font-size:12px;line-height:16px;color:#333;font-weight:400;letter-spacing:-0.1px;white-space:nowrap;left:510.5px;width:800px;text-align:right;">540,578</div>
<div style="left:1318px;top:430px;width:103px;height:26px;background:#e1f2fd;"></div>
<div style="top:434.84px;font-size:12px;line-height:16px;color:#333;font-weight:400;letter-spacing:-0.1px;white-space:nowrap;left:614.5px;width:800px;text-align:right;">781,249,828</div>
<div style="left:261px;top:457px;width:85px;height:26px;background:#fff1e0;"></div>
<div style="left:300px;top:465px;width:7px;height:12px;"><svg width="7" height="12" viewBox="0 0 7 12" style="display:block"><path d="M3.5 0 V9.5" stroke="#d9664c" stroke-width="0.95"/><path d="M0.8 8.8 L3.5 11.8 L6.2 8.8 Z" fill="#d2461e"/></svg></div>
<div style="left:347px;top:457px;width:126px;height:26px;background:#fff1e0;"></div>
<div style="top:461.84px;font-size:12px;line-height:16px;color:#333;font-weight:400;letter-spacing:-0.1px;white-space:nowrap;left:-333.5px;width:800px;text-align:right;">0</div>
<div style="left:474px;top:457px;width:126px;height:26px;background:#fff1e0;"></div>
<div style="top:461.84px;font-size:12px;line-height:16px;color:#333;font-weight:400;letter-spacing:-0.1px;white-space:nowrap;left:-206.5px;width:800px;text-align:right;">0</div>
<div style="left:601px;top:457px;width:138px;height:26px;background:#fff1e0;"></div>
<div style="top:461.84px;font-size:12px;line-height:16px;color:#333;font-weight:400;letter-spacing:-0.1px;white-space:nowrap;left:-67.5px;width:800px;text-align:right;">0</div>
<div style="left:740px;top:457px;width:56px;height:26px;background:#fff1e0;"></div>
<div style="top:461.84px;font-size:12px;line-height:16px;color:#333;font-weight:400;letter-spacing:-0.1px;white-space:nowrap;left:-10.5px;width:800px;text-align:right;">0.077</div>
<div style="left:797px;top:457px;width:56px;height:26px;background:#fff1e0;"></div>
<div style="top:461.84px;font-size:12px;line-height:16px;color:#333;font-weight:400;letter-spacing:-0.1px;white-space:nowrap;left:46.5px;width:800px;text-align:right;">0.041</div>
<div style="left:854px;top:457px;width:57px;height:26px;background:#fff1e0;"></div>
<div style="top:461.84px;font-size:12px;line-height:16px;color:#333;font-weight:400;letter-spacing:-0.1px;white-space:nowrap;left:104.5px;width:800px;text-align:right;">0.089</div>
<div style="left:912px;top:457px;width:65px;height:26px;background:#fff1e0;"></div>
<div style="top:461.84px;font-size:12px;line-height:16px;color:#333;font-weight:400;letter-spacing:-0.1px;white-space:nowrap;left:170.5px;width:800px;text-align:right;">42.832</div>
<div style="left:978px;top:457px;width:65px;height:26px;background:#fff1e0;"></div>
<div style="top:461.84px;font-size:12px;line-height:16px;color:#333;font-weight:400;letter-spacing:-0.1px;white-space:nowrap;left:236.5px;width:800px;text-align:right;">32.619</div>
<div style="left:1044px;top:457px;width:74px;height:26px;background:#fff1e0;"></div>
<div style="top:461.84px;font-size:12px;line-height:16px;color:#333;font-weight:400;letter-spacing:-0.1px;white-space:nowrap;left:311.5px;width:800px;text-align:right;">123.775</div>
<div style="left:1119px;top:457px;width:98px;height:26px;background:#fff1e0;"></div>
<div style="top:461.84px;font-size:12px;line-height:16px;color:#333;font-weight:400;letter-spacing:-0.1px;white-space:nowrap;left:410.5px;width:800px;text-align:right;">554,009</div>
<div style="left:1218px;top:457px;width:99px;height:26px;background:#fff1e0;"></div>
<div style="top:461.84px;font-size:12px;line-height:16px;color:#333;font-weight:400;letter-spacing:-0.1px;white-space:nowrap;left:510.5px;width:800px;text-align:right;">554,009</div>
<div style="left:1318px;top:457px;width:103px;height:26px;background:#fff1e0;"></div>
<div style="top:461.84px;font-size:12px;line-height:16px;color:#333;font-weight:400;letter-spacing:-0.1px;white-space:nowrap;left:614.5px;width:800px;text-align:right;">781,249,828</div>
<div style="left:75px;top:484px;width:104px;height:53px;background:#f4f4f4;"></div>
<div style="left:181px;top:484px;width:78px;height:53px;background:#f4f4f4;"></div>
<div style="top:503.14px;font-size:12px;line-height:16px;color:#333;font-weight:400;letter-spacing:-0.1px;white-space:nowrap;left:-273.0px;width:800px;text-align:center;">#5</div>
<div style="top:503.14px;font-size:12px;line-height:16px;color:#333;font-weight:400;letter-spacing:-0.1px;white-space:nowrap;left:-180.0px;width:800px;text-align:center;">00:02:25</div>
<div style="left:261px;top:484px;width:85px;height:26px;background:#e1f2fd;"></div>
<div style="left:300px;top:492px;width:7px;height:12px;"><svg width="7" height="12" viewBox="0 0 7 12" style="display:block"><path d="M3.5 2.5 V12" stroke="#6262bc" stroke-width="0.95"/><path d="M0.8 3.2 L3.5 0.2 L6.2 3.2 Z" fill="#3c3c9c"/></svg></div>
<div style="left:347px;top:484px;width:126px;height:26px;background:#e1f2fd;"></div>
<div style="top:488.84px;font-size:12px;line-height:16px;color:#333;font-weight:400;letter-spacing:-0.1px;white-space:nowrap;left:-333.5px;width:800px;text-align:right;">0</div>
<div style="left:474px;top:484px;width:126px;height:26px;background:#e1f2fd;"></div>
<div style="top:488.84px;font-size:12px;line-height:16px;color:#333;font-weight:400;letter-spacing:-0.1px;white-space:nowrap;left:-206.5px;width:800px;text-align:right;">0</div>
<div style="left:601px;top:484px;width:138px;height:26px;background:#e1f2fd;"></div>
<div style="top:488.84px;font-size:12px;line-height:16px;color:#333;font-weight:400;letter-spacing:-0.1px;white-space:nowrap;left:-67.5px;width:800px;text-align:right;">0</div>
<div style="left:740px;top:484px;width:56px;height:26px;background:#e1f2fd;"></div>
<div style="top:488.84px;font-size:12px;line-height:16px;color:#333;font-weight:400;letter-spacing:-0.1px;white-space:nowrap;left:-10.5px;width:800px;text-align:right;">0.076</div>
<div style="left:797px;top:484px;width:56px;height:26px;background:#e1f2fd;"></div>
<div style="top:488.84px;font-size:12px;line-height:16px;color:#333;font-weight:400;letter-spacing:-0.1px;white-space:nowrap;left:46.5px;width:800px;text-align:right;">0.064</div>
<div style="left:854px;top:484px;width:57px;height:26px;background:#e1f2fd;"></div>
<div style="top:488.84px;font-size:12px;line-height:16px;color:#333;font-weight:400;letter-spacing:-0.1px;white-space:nowrap;left:104.5px;width:800px;text-align:right;">0.089</div>
<div style="left:912px;top:484px;width:65px;height:26px;background:#e1f2fd;"></div>
<div style="top:488.84px;font-size:12px;line-height:16px;color:#333;font-weight:400;letter-spacing:-0.1px;white-space:nowrap;left:170.5px;width:800px;text-align:right;">42.847</div>
<div style="left:978px;top:484px;width:65px;height:26px;background:#e1f2fd;"></div>
<div style="top:488.84px;font-size:12px;line-height:16px;color:#333;font-weight:400;letter-spacing:-0.1px;white-space:nowrap;left:236.5px;width:800px;text-align:right;">31.808</div>
<div style="left:1044px;top:484px;width:74px;height:26px;background:#e1f2fd;"></div>
<div style="top:488.84px;font-size:12px;line-height:16px;color:#333;font-weight:400;letter-spacing:-0.1px;white-space:nowrap;left:311.5px;width:800px;text-align:right;">109.978</div>
<div style="left:1119px;top:484px;width:98px;height:26px;background:#e1f2fd;"></div>
<div style="top:488.84px;font-size:12px;line-height:16px;color:#333;font-weight:400;letter-spacing:-0.1px;white-space:nowrap;left:410.5px;width:800px;text-align:right;">540,566</div>
<div style="left:1218px;top:484px;width:99px;height:26px;background:#e1f2fd;"></div>
<div style="top:488.84px;font-size:12px;line-height:16px;color:#333;font-weight:400;letter-spacing:-0.1px;white-space:nowrap;left:510.5px;width:800px;text-align:right;">540,566</div>
<div style="left:1318px;top:484px;width:103px;height:26px;background:#e1f2fd;"></div>
<div style="top:488.84px;font-size:12px;line-height:16px;color:#333;font-weight:400;letter-spacing:-0.1px;white-space:nowrap;left:614.5px;width:800px;text-align:right;">781,249,828</div>
<div style="left:261px;top:511px;width:85px;height:26px;background:#fff1e0;"></div>
<div style="left:300px;top:519px;width:7px;height:12px;"><svg width="7" height="12" viewBox="0 0 7 12" style="display:block"><path d="M3.5 0 V9.5" stroke="#d9664c" stroke-width="0.95"/><path d="M0.8 8.8 L3.5 11.8 L6.2 8.8 Z" fill="#d2461e"/></svg></div>
<div style="left:347px;top:511px;width:126px;height:26px;background:#fff1e0;"></div>
<div style="top:515.84px;font-size:12px;line-height:16px;color:#333;font-weight:400;letter-spacing:-0.1px;white-space:nowrap;left:-333.5px;width:800px;text-align:right;">0</div>
<div style="left:474px;top:511px;width:126px;height:26px;background:#fff1e0;"></div>
<div style="top:515.84px;font-size:12px;line-height:16px;color:#333;font-weight:400;letter-spacing:-0.1px;white-space:nowrap;left:-206.5px;width:800px;text-align:right;">0</div>
<div style="left:601px;top:511px;width:138px;height:26px;background:#fff1e0;"></div>
<div style="top:515.84px;font-size:12px;line-height:16px;color:#333;font-weight:400;letter-spacing:-0.1px;white-space:nowrap;left:-67.5px;width:800px;text-align:right;">0</div>
<div style="left:740px;top:511px;width:56px;height:26px;background:#fff1e0;"></div>
<div style="top:515.84px;font-size:12px;line-height:16px;color:#333;font-weight:400;letter-spacing:-0.1px;white-space:nowrap;left:-10.5px;width:800px;text-align:right;">0.077</div>
<div style="left:797px;top:511px;width:56px;height:26px;background:#fff1e0;"></div>
<div style="top:515.84px;font-size:12px;line-height:16px;color:#333;font-weight:400;letter-spacing:-0.1px;white-space:nowrap;left:46.5px;width:800px;text-align:right;">0.021</div>
<div style="left:854px;top:511px;width:57px;height:26px;background:#fff1e0;"></div>
<div style="top:515.84px;font-size:12px;line-height:16px;color:#333;font-weight:400;letter-spacing:-0.1px;white-space:nowrap;left:104.5px;width:800px;text-align:right;">0.089</div>
<div style="left:912px;top:511px;width:65px;height:26px;background:#fff1e0;"></div>
<div style="top:515.84px;font-size:12px;line-height:16px;color:#333;font-weight:400;letter-spacing:-0.1px;white-space:nowrap;left:170.5px;width:800px;text-align:right;">42.832</div>
<div style="left:978px;top:511px;width:65px;height:26px;background:#fff1e0;"></div>
<div style="top:515.84px;font-size:12px;line-height:16px;color:#333;font-weight:400;letter-spacing:-0.1px;white-space:nowrap;left:236.5px;width:800px;text-align:right;">34.152</div>
<div style="left:1044px;top:511px;width:74px;height:26px;background:#fff1e0;"></div>
<div style="top:515.84px;font-size:12px;line-height:16px;color:#333;font-weight:400;letter-spacing:-0.1px;white-space:nowrap;left:311.5px;width:800px;text-align:right;">123.786</div>
<div style="left:1119px;top:511px;width:98px;height:26px;background:#fff1e0;"></div>
<div style="top:515.84px;font-size:12px;line-height:16px;color:#333;font-weight:400;letter-spacing:-0.1px;white-space:nowrap;left:410.5px;width:800px;text-align:right;">553,944</div>
<div style="left:1218px;top:511px;width:99px;height:26px;background:#fff1e0;"></div>
<div style="top:515.84px;font-size:12px;line-height:16px;color:#333;font-weight:400;letter-spacing:-0.1px;white-space:nowrap;left:510.5px;width:800px;text-align:right;">553,944</div>
<div style="left:1318px;top:511px;width:103px;height:26px;background:#fff1e0;"></div>
<div style="top:515.84px;font-size:12px;line-height:16px;color:#333;font-weight:400;letter-spacing:-0.1px;white-space:nowrap;left:614.5px;width:800px;text-align:right;">781,249,828</div>
<div style="left:75px;top:538px;width:104px;height:53px;background:#f4f4f4;"></div>
<div style="left:181px;top:538px;width:78px;height:53px;background:#f4f4f4;"></div>
<div style="top:557.14px;font-size:12px;line-height:16px;color:#333;font-weight:400;letter-spacing:-0.1px;white-space:nowrap;left:-273.0px;width:800px;text-align:center;">#6</div>
<div style="top:557.14px;font-size:12px;line-height:16px;color:#333;font-weight:400;letter-spacing:-0.1px;white-space:nowrap;left:-180.0px;width:800px;text-align:center;">00:02:25</div>
<div style="left:261px;top:538px;width:85px;height:26px;background:#e1f2fd;"></div>
<div style="left:300px;top:546px;width:7px;height:12px;"><svg width="7" height="12" viewBox="0 0 7 12" style="display:block"><path d="M3.5 2.5 V12" stroke="#6262bc" stroke-width="0.95"/><path d="M0.8 3.2 L3.5 0.2 L6.2 3.2 Z" fill="#3c3c9c"/></svg></div>
<div style="left:347px;top:538px;width:126px;height:26px;background:#e1f2fd;"></div>
<div style="top:542.84px;font-size:12px;line-height:16px;color:#333;font-weight:400;letter-spacing:-0.1px;white-space:nowrap;left:-333.5px;width:800px;text-align:right;">0</div>
<div style="left:474px;top:538px;width:126px;height:26px;background:#e1f2fd;"></div>
<div style="top:542.84px;font-size:12px;line-height:16px;color:#333;font-weight:400;letter-spacing:-0.1px;white-space:nowrap;left:-206.5px;width:800px;text-align:right;">0</div>
<div style="left:601px;top:538px;width:138px;height:26px;background:#e1f2fd;"></div>
<div style="top:542.84px;font-size:12px;line-height:16px;color:#333;font-weight:400;letter-spacing:-0.1px;white-space:nowrap;left:-67.5px;width:800px;text-align:right;">0</div>
<div style="left:740px;top:538px;width:56px;height:26px;background:#e1f2fd;"></div>
<div style="top:542.84px;font-size:12px;line-height:16px;color:#333;font-weight:400;letter-spacing:-0.1px;white-space:nowrap;left:-10.5px;width:800px;text-align:right;">0.076</div>
<div style="left:797px;top:538px;width:56px;height:26px;background:#e1f2fd;"></div>
<div style="top:542.84px;font-size:12px;line-height:16px;color:#333;font-weight:400;letter-spacing:-0.1px;white-space:nowrap;left:46.5px;width:800px;text-align:right;">0.064</div>
<div style="left:854px;top:538px;width:57px;height:26px;background:#e1f2fd;"></div>
<div style="top:542.84px;font-size:12px;line-height:16px;color:#333;font-weight:400;letter-spacing:-0.1px;white-space:nowrap;left:104.5px;width:800px;text-align:right;">0.089</div>
<div style="left:912px;top:538px;width:65px;height:26px;background:#e1f2fd;"></div>
<div style="top:542.84px;font-size:12px;line-height:16px;color:#333;font-weight:400;letter-spacing:-0.1px;white-space:nowrap;left:170.5px;width:800px;text-align:right;">42.847</div>
<div style="left:978px;top:538px;width:65px;height:26px;background:#e1f2fd;"></div>
<div style="top:542.84px;font-size:12px;line-height:16px;color:#333;font-weight:400;letter-spacing:-0.1px;white-space:nowrap;left:236.5px;width:800px;text-align:right;">31.808</div>
<div style="left:1044px;top:538px;width:74px;height:26px;background:#e1f2fd;"></div>
<div style="top:542.84px;font-size:12px;line-height:16px;color:#333;font-weight:400;letter-spacing:-0.1px;white-space:nowrap;left:311.5px;width:800px;text-align:right;">109.989</div>
<div style="left:1119px;top:538px;width:98px;height:26px;background:#e1f2fd;"></div>
<div style="top:542.84px;font-size:12px;line-height:16px;color:#333;font-weight:400;letter-spacing:-0.1px;white-space:nowrap;left:410.5px;width:800px;text-align:right;">540,618</div>
<div style="left:1218px;top:538px;width:99px;height:26px;background:#e1f2fd;"></div>
<div style="top:542.84px;font-size:12px;line-height:16px;color:#333;font-weight:400;letter-spacing:-0.1px;white-space:nowrap;left:510.5px;width:800px;text-align:right;">540,618</div>
<div style="left:1318px;top:538px;width:103px;height:26px;background:#e1f2fd;"></div>
<div style="top:542.84px;font-size:12px;line-height:16px;color:#333;font-weight:400;letter-spacing:-0.1px;white-space:nowrap;left:614.5px;width:800px;text-align:right;">781,249,828</div>
<div style="left:261px;top:565px;width:85px;height:26px;background:#fff1e0;"></div>
<div style="left:300px;top:573px;width:7px;height:12px;"><svg width="7" height="12" viewBox="0 0 7 12" style="display:block"><path d="M3.5 0 V9.5" stroke="#d9664c" stroke-width="0.95"/><path d="M0.8 8.8 L3.5 11.8 L6.2 8.8 Z" fill="#d2461e"/></svg></div>
<div style="left:347px;top:565px;width:126px;height:26px;background:#fff1e0;"></div>
<div style="top:569.84px;font-size:12px;line-height:16px;color:#333;font-weight:400;letter-spacing:-0.1px;white-space:nowrap;left:-333.5px;width:800px;text-align:right;">0</div>
<div style="left:474px;top:565px;width:126px;height:26px;background:#fff1e0;"></div>
<div style="top:569.84px;font-size:12px;line-height:16px;color:#333;font-weight:400;letter-spacing:-0.1px;white-space:nowrap;left:-206.5px;width:800px;text-align:right;">0</div>
<div style="left:601px;top:565px;width:138px;height:26px;background:#fff1e0;"></div>
<div style="top:569.84px;font-size:12px;line-height:16px;color:#333;font-weight:400;letter-spacing:-0.1px;white-space:nowrap;left:-67.5px;width:800px;text-align:right;">0</div>
<div style="left:740px;top:565px;width:56px;height:26px;background:#fff1e0;"></div>
<div style="top:569.84px;font-size:12px;line-height:16px;color:#333;font-weight:400;letter-spacing:-0.1px;white-space:nowrap;left:-10.5px;width:800px;text-align:right;">0.077</div>
<div style="left:797px;top:565px;width:56px;height:26px;background:#fff1e0;"></div>
<div style="top:569.84px;font-size:12px;line-height:16px;color:#333;font-weight:400;letter-spacing:-0.1px;white-space:nowrap;left:46.5px;width:800px;text-align:right;">0.021</div>
<div style="left:854px;top:565px;width:57px;height:26px;background:#fff1e0;"></div>
<div style="top:569.84px;font-size:12px;line-height:16px;color:#333;font-weight:400;letter-spacing:-0.1px;white-space:nowrap;left:104.5px;width:800px;text-align:right;">0.089</div>
<div style="left:912px;top:565px;width:65px;height:26px;background:#fff1e0;"></div>
<div style="top:569.84px;font-size:12px;line-height:16px;color:#333;font-weight:400;letter-spacing:-0.1px;white-space:nowrap;left:170.5px;width:800px;text-align:right;">42.832</div>
<div style="left:978px;top:565px;width:65px;height:26px;background:#fff1e0;"></div>
<div style="top:569.84px;font-size:12px;line-height:16px;color:#333;font-weight:400;letter-spacing:-0.1px;white-space:nowrap;left:236.5px;width:800px;text-align:right;">34.153</div>
<div style="left:1044px;top:565px;width:74px;height:26px;background:#fff1e0;"></div>
<div style="top:569.84px;font-size:12px;line-height:16px;color:#333;font-weight:400;letter-spacing:-0.1px;white-space:nowrap;left:311.5px;width:800px;text-align:right;">123.796</div>
<div style="left:1119px;top:565px;width:98px;height:26px;background:#fff1e0;"></div>
<div style="top:569.84px;font-size:12px;line-height:16px;color:#333;font-weight:400;letter-spacing:-0.1px;white-space:nowrap;left:410.5px;width:800px;text-align:right;">553,913</div>
<div style="left:1218px;top:565px;width:99px;height:26px;background:#fff1e0;"></div>
<div style="top:569.84px;font-size:12px;line-height:16px;color:#333;font-weight:400;letter-spacing:-0.1px;white-space:nowrap;left:510.5px;width:800px;text-align:right;">553,913</div>
<div style="left:1318px;top:565px;width:103px;height:26px;background:#fff1e0;"></div>
<div style="top:569.84px;font-size:12px;line-height:16px;color:#333;font-weight:400;letter-spacing:-0.1px;white-space:nowrap;left:614.5px;width:800px;text-align:right;">781,249,828</div>
<div style="left:75px;top:592px;width:104px;height:53px;background:#f4f4f4;"></div>
<div style="left:181px;top:592px;width:78px;height:53px;background:#f4f4f4;"></div>
<div style="top:611.14px;font-size:12px;line-height:16px;color:#333;font-weight:400;letter-spacing:-0.1px;white-space:nowrap;left:-273.0px;width:800px;text-align:center;">#7</div>
<div style="top:611.14px;font-size:12px;line-height:16px;color:#333;font-weight:400;letter-spacing:-0.1px;white-space:nowrap;left:-180.0px;width:800px;text-align:center;">00:02:25</div>
<div style="left:261px;top:592px;width:85px;height:26px;background:#e1f2fd;"></div>
<div style="left:300px;top:600px;width:7px;height:12px;"><svg width="7" height="12" viewBox="0 0 7 12" style="display:block"><path d="M3.5 2.5 V12" stroke="#6262bc" stroke-width="0.95"/><path d="M0.8 3.2 L3.5 0.2 L6.2 3.2 Z" fill="#3c3c9c"/></svg></div>
<div style="left:347px;top:592px;width:126px;height:26px;background:#e1f2fd;"></div>
<div style="top:596.84px;font-size:12px;line-height:16px;color:#333;font-weight:400;letter-spacing:-0.1px;white-space:nowrap;left:-333.5px;width:800px;text-align:right;">0</div>
<div style="left:474px;top:592px;width:126px;height:26px;background:#e1f2fd;"></div>
<div style="top:596.84px;font-size:12px;line-height:16px;color:#333;font-weight:400;letter-spacing:-0.1px;white-space:nowrap;left:-206.5px;width:800px;text-align:right;">0</div>
<div style="left:601px;top:592px;width:138px;height:26px;background:#e1f2fd;"></div>
<div style="top:596.84px;font-size:12px;line-height:16px;color:#333;font-weight:400;letter-spacing:-0.1px;white-space:nowrap;left:-67.5px;width:800px;text-align:right;">0</div>
<div style="left:740px;top:592px;width:56px;height:26px;background:#e1f2fd;"></div>
<div style="top:596.84px;font-size:12px;line-height:16px;color:#333;font-weight:400;letter-spacing:-0.1px;white-space:nowrap;left:-10.5px;width:800px;text-align:right;">0.076</div>
<div style="left:797px;top:592px;width:56px;height:26px;background:#e1f2fd;"></div>
<div style="top:596.84px;font-size:12px;line-height:16px;color:#333;font-weight:400;letter-spacing:-0.1px;white-space:nowrap;left:46.5px;width:800px;text-align:right;">0.064</div>
<div style="left:854px;top:592px;width:57px;height:26px;background:#e1f2fd;"></div>
<div style="top:596.84px;font-size:12px;line-height:16px;color:#333;font-weight:400;letter-spacing:-0.1px;white-space:nowrap;left:104.5px;width:800px;text-align:right;">0.089</div>
<div style="left:912px;top:592px;width:65px;height:26px;background:#e1f2fd;"></div>
<div style="top:596.84px;font-size:12px;line-height:16px;color:#333;font-weight:400;letter-spacing:-0.1px;white-space:nowrap;left:170.5px;width:800px;text-align:right;">42.847</div>
<div style="left:978px;top:592px;width:65px;height:26px;background:#e1f2fd;"></div>
<div style="top:596.84px;font-size:12px;line-height:16px;color:#333;font-weight:400;letter-spacing:-0.1px;white-space:nowrap;left:236.5px;width:800px;text-align:right;">31.809</div>
<div style="left:1044px;top:592px;width:74px;height:26px;background:#e1f2fd;"></div>
<div style="top:596.84px;font-size:12px;line-height:16px;color:#333;font-weight:400;letter-spacing:-0.1px;white-space:nowrap;left:311.5px;width:800px;text-align:right;">110</div>
<div style="left:1119px;top:592px;width:98px;height:26px;background:#e1f2fd;"></div>
<div style="top:596.84px;font-size:12px;line-height:16px;color:#333;font-weight:400;letter-spacing:-0.1px;white-space:nowrap;left:410.5px;width:800px;text-align:right;">540,563</div>
<div style="left:1218px;top:592px;width:99px;height:26px;background:#e1f2fd;"></div>
<div style="top:596.84px;font-size:12px;line-height:16px;color:#333;font-weight:400;letter-spacing:-0.1px;white-space:nowrap;left:510.5px;width:800px;text-align:right;">540,563</div>
<div style="left:1318px;top:592px;width:103px;height:26px;background:#e1f2fd;"></div>
<div style="top:596.84px;font-size:12px;line-height:16px;color:#333;font-weight:400;letter-spacing:-0.1px;white-space:nowrap;left:614.5px;width:800px;text-align:right;">781,249,828</div>
<div style="left:261px;top:619px;width:85px;height:26px;background:#fff1e0;"></div>
<div style="left:300px;top:627px;width:7px;height:12px;"><svg width="7" height="12" viewBox="0 0 7 12" style="display:block"><path d="M3.5 0 V9.5" stroke="#d9664c" stroke-width="0.95"/><path d="M0.8 8.8 L3.5 11.8 L6.2 8.8 Z" fill="#d2461e"/></svg></div>
<div style="left:347px;top:619px;width:126px;height:26px;background:#fff1e0;"></div>
<div style="top:623.84px;font-size:12px;line-height:16px;color:#333;font-weight:400;letter-spacing:-0.1px;white-space:nowrap;left:-333.5px;width:800px;text-align:right;">0</div>
<div style="left:474px;top:619px;width:126px;height:26px;background:#fff1e0;"></div>
<div style="top:623.84px;font-size:12px;line-height:16px;color:#333;font-weight:400;letter-spacing:-0.1px;white-space:nowrap;left:-206.5px;width:800px;text-align:right;">0</div>
<div style="left:601px;top:619px;width:138px;height:26px;background:#fff1e0;"></div>
<div style="top:623.84px;font-size:12px;line-height:16px;color:#333;font-weight:400;letter-spacing:-0.1px;white-space:nowrap;left:-67.5px;width:800px;text-align:right;">0</div>
<div style="left:740px;top:619px;width:56px;height:26px;background:#fff1e0;"></div>
<div style="top:623.84px;font-size:12px;line-height:16px;color:#333;font-weight:400;letter-spacing:-0.1px;white-space:nowrap;left:-10.5px;width:800px;text-align:right;">0.077</div>
<div style="left:797px;top:619px;width:56px;height:26px;background:#fff1e0;"></div>
<div style="top:623.84px;font-size:12px;line-height:16px;color:#333;font-weight:400;letter-spacing:-0.1px;white-space:nowrap;left:46.5px;width:800px;text-align:right;">0.021</div>
<div style="left:854px;top:619px;width:57px;height:26px;background:#fff1e0;"></div>
<div style="top:623.84px;font-size:12px;line-height:16px;color:#333;font-weight:400;letter-spacing:-0.1px;white-space:nowrap;left:104.5px;width:800px;text-align:right;">0.089</div>
<div style="left:912px;top:619px;width:65px;height:26px;background:#fff1e0;"></div>
<div style="top:623.84px;font-size:12px;line-height:16px;color:#333;font-weight:400;letter-spacing:-0.1px;white-space:nowrap;left:170.5px;width:800px;text-align:right;">42.832</div>
<div style="left:978px;top:619px;width:65px;height:26px;background:#fff1e0;"></div>
<div style="top:623.84px;font-size:12px;line-height:16px;color:#333;font-weight:400;letter-spacing:-0.1px;white-space:nowrap;left:236.5px;width:800px;text-align:right;">36.452</div>
<div style="left:1044px;top:619px;width:74px;height:26px;background:#fff1e0;"></div>
<div style="top:623.84px;font-size:12px;line-height:16px;color:#333;font-weight:400;letter-spacing:-0.1px;white-space:nowrap;left:311.5px;width:800px;text-align:right;">123.818</div>
<div style="left:1119px;top:619px;width:98px;height:26px;background:#fff1e0;"></div>
<div style="top:623.84px;font-size:12px;line-height:16px;color:#333;font-weight:400;letter-spacing:-0.1px;white-space:nowrap;left:410.5px;width:800px;text-align:right;">553,986</div>
<div style="left:1218px;top:619px;width:99px;height:26px;background:#fff1e0;"></div>
<div style="top:623.84px;font-size:12px;line-height:16px;color:#333;font-weight:400;letter-spacing:-0.1px;white-space:nowrap;left:510.5px;width:800px;text-align:right;">553,986</div>
<div style="left:1318px;top:619px;width:103px;height:26px;background:#fff1e0;"></div>
<div style="top:623.84px;font-size:12px;line-height:16px;color:#333;font-weight:400;letter-spacing:-0.1px;white-space:nowrap;left:614.5px;width:800px;text-align:right;">781,249,828</div>
<div style="left:75px;top:646px;width:104px;height:53px;background:#f4f4f4;"></div>
<div style="left:181px;top:646px;width:78px;height:53px;background:#f4f4f4;"></div>
<div style="top:665.14px;font-size:12px;line-height:16px;color:#333;font-weight:400;letter-spacing:-0.1px;white-space:nowrap;left:-273.0px;width:800px;text-align:center;">#8</div>
<div style="top:665.14px;font-size:12px;line-height:16px;color:#333;font-weight:400;letter-spacing:-0.1px;white-space:nowrap;left:-180.0px;width:800px;text-align:center;">00:02:25</div>
<div style="left:261px;top:646px;width:85px;height:26px;background:#e1f2fd;"></div>
<div style="left:300px;top:654px;width:7px;height:12px;"><svg width="7" height="12" viewBox="0 0 7 12" style="display:block"><path d="M3.5 2.5 V12" stroke="#6262bc" stroke-width="0.95"/><path d="M0.8 3.2 L3.5 0.2 L6.2 3.2 Z" fill="#3c3c9c"/></svg></div>
<div style="left:347px;top:646px;width:126px;height:26px;background:#e1f2fd;"></div>
<div style="top:650.84px;font-size:12px;line-height:16px;color:#333;font-weight:400;letter-spacing:-0.1px;white-space:nowrap;left:-333.5px;width:800px;text-align:right;">0</div>
<div style="left:474px;top:646px;width:126px;height:26px;background:#e1f2fd;"></div>
<div style="top:650.84px;font-size:12px;line-height:16px;color:#333;font-weight:400;letter-spacing:-0.1px;white-space:nowrap;left:-206.5px;width:800px;text-align:right;">0</div>
<div style="left:601px;top:646px;width:138px;height:26px;background:#e1f2fd;"></div>
<div style="top:650.84px;font-size:12px;line-height:16px;color:#333;font-weight:400;letter-spacing:-0.1px;white-space:nowrap;left:-67.5px;width:800px;text-align:right;">0</div>
<div style="left:740px;top:646px;width:56px;height:26px;background:#e1f2fd;"></div>
<div style="top:650.84px;font-size:12px;line-height:16px;color:#333;font-weight:400;letter-spacing:-0.1px;white-space:nowrap;left:-10.5px;width:800px;text-align:right;">0.076</div>
<div style="left:797px;top:646px;width:56px;height:26px;background:#e1f2fd;"></div>
<div style="top:650.84px;font-size:12px;line-height:16px;color:#333;font-weight:400;letter-spacing:-0.1px;white-space:nowrap;left:46.5px;width:800px;text-align:right;">0.064</div>
<div style="left:854px;top:646px;width:57px;height:26px;background:#e1f2fd;"></div>
<div style="top:650.84px;font-size:12px;line-height:16px;color:#333;font-weight:400;letter-spacing:-0.1px;white-space:nowrap;left:104.5px;width:800px;text-align:right;">0.089</div>
<div style="left:912px;top:646px;width:65px;height:26px;background:#e1f2fd;"></div>
<div style="top:650.84px;font-size:12px;line-height:16px;color:#333;font-weight:400;letter-spacing:-0.1px;white-space:nowrap;left:170.5px;width:800px;text-align:right;">42.847</div>
<div style="left:978px;top:646px;width:65px;height:26px;background:#e1f2fd;"></div>
<div style="top:650.84px;font-size:12px;line-height:16px;color:#333;font-weight:400;letter-spacing:-0.1px;white-space:nowrap;left:236.5px;width:800px;text-align:right;">31.809</div>
<div style="left:1044px;top:646px;width:74px;height:26px;background:#e1f2fd;"></div>
<div style="top:650.84px;font-size:12px;line-height:16px;color:#333;font-weight:400;letter-spacing:-0.1px;white-space:nowrap;left:311.5px;width:800px;text-align:right;">110.011</div>
<div style="left:1119px;top:646px;width:98px;height:26px;background:#e1f2fd;"></div>
<div style="top:650.84px;font-size:12px;line-height:16px;color:#333;font-weight:400;letter-spacing:-0.1px;white-space:nowrap;left:410.5px;width:800px;text-align:right;">540,571</div>
<div style="left:1218px;top:646px;width:99px;height:26px;background:#e1f2fd;"></div>
<div style="top:650.84px;font-size:12px;line-height:16px;color:#333;font-weight:400;letter-spacing:-0.1px;white-space:nowrap;left:510.5px;width:800px;text-align:right;">540,571</div>
<div style="left:1318px;top:646px;width:103px;height:26px;background:#e1f2fd;"></div>
<div style="top:650.84px;font-size:12px;line-height:16px;color:#333;font-weight:400;letter-spacing:-0.1px;white-space:nowrap;left:614.5px;width:800px;text-align:right;">781,249,828</div>
<div style="left:261px;top:673px;width:85px;height:26px;background:#fff1e0;"></div>
<div style="left:300px;top:681px;width:7px;height:12px;"><svg width="7" height="12" viewBox="0 0 7 12" style="display:block"><path d="M3.5 0 V9.5" stroke="#d9664c" stroke-width="0.95"/><path d="M0.8 8.8 L3.5 11.8 L6.2 8.8 Z" fill="#d2461e"/></svg></div>
<div style="left:347px;top:673px;width:126px;height:26px;background:#fff1e0;"></div>
<div style="top:677.84px;font-size:12px;line-height:16px;color:#333;font-weight:400;letter-spacing:-0.1px;white-space:nowrap;left:-333.5px;width:800px;text-align:right;">0</div>
<div style="left:474px;top:673px;width:126px;height:26px;background:#fff1e0;"></div>
<div style="top:677.84px;font-size:12px;line-height:16px;color:#333;font-weight:400;letter-spacing:-0.1px;white-space:nowrap;left:-206.5px;width:800px;text-align:right;">0</div>
<div style="left:601px;top:673px;width:138px;height:26px;background:#fff1e0;"></div>
<div style="top:677.84px;font-size:12px;line-height:16px;color:#333;font-weight:400;letter-spacing:-0.1px;white-space:nowrap;left:-67.5px;width:800px;text-align:right;">0</div>
<div style="left:740px;top:673px;width:56px;height:26px;background:#fff1e0;"></div>
<div style="top:677.84px;font-size:12px;line-height:16px;color:#333;font-weight:400;letter-spacing:-0.1px;white-space:nowrap;left:-10.5px;width:800px;text-align:right;">0.077</div>
<div style="left:797px;top:673px;width:56px;height:26px;background:#fff1e0;"></div>
<div style="top:677.84px;font-size:12px;line-height:16px;color:#333;font-weight:400;letter-spacing:-0.1px;white-space:nowrap;left:46.5px;width:800px;text-align:right;">0.021</div>
<div style="left:854px;top:673px;width:57px;height:26px;background:#fff1e0;"></div>
<div style="top:677.84px;font-size:12px;line-height:16px;color:#333;font-weight:400;letter-spacing:-0.1px;white-space:nowrap;left:104.5px;width:800px;text-align:right;">0.089</div>
<div style="left:912px;top:673px;width:65px;height:26px;background:#fff1e0;"></div>
<div style="top:677.84px;font-size:12px;line-height:16px;color:#333;font-weight:400;letter-spacing:-0.1px;white-space:nowrap;left:170.5px;width:800px;text-align:right;">42.832</div>
<div style="left:978px;top:673px;width:65px;height:26px;background:#fff1e0;"></div>
<div style="top:677.84px;font-size:12px;line-height:16px;color:#333;font-weight:400;letter-spacing:-0.1px;white-space:nowrap;left:236.5px;width:800px;text-align:right;">36.453</div>
<div style="left:1044px;top:673px;width:74px;height:26px;background:#fff1e0;"></div>
<div style="top:677.84px;font-size:12px;line-height:16px;color:#333;font-weight:400;letter-spacing:-0.1px;white-space:nowrap;left:311.5px;width:800px;text-align:right;">123.829</div>
<div style="left:1119px;top:673px;width:98px;height:26px;background:#fff1e0;"></div>
<div style="top:677.84px;font-size:12px;line-height:16px;color:#333;font-weight:400;letter-spacing:-0.1px;white-space:nowrap;left:410.5px;width:800px;text-align:right;">554,044</div>
<div style="left:1218px;top:673px;width:99px;height:26px;background:#fff1e0;"></div>
<div style="top:677.84px;font-size:12px;line-height:16px;color:#333;font-weight:400;letter-spacing:-0.1px;white-space:nowrap;left:510.5px;width:800px;text-align:right;">554,044</div>
<div style="left:1318px;top:673px;width:103px;height:26px;background:#fff1e0;"></div>
<div style="top:677.84px;font-size:12px;line-height:16px;color:#333;font-weight:400;letter-spacing:-0.1px;white-space:nowrap;left:614.5px;width:800px;text-align:right;">781,249,828</div>
<div style="left:75px;top:700px;width:104px;height:53px;background:#f4f4f4;"></div>
<div style="left:181px;top:700px;width:78px;height:53px;background:#f4f4f4;"></div>
<div style="top:719.14px;font-size:12px;line-height:16px;color:#333;font-weight:400;letter-spacing:-0.1px;white-space:nowrap;left:-273.0px;width:800px;text-align:center;">#9</div>
<div style="top:719.14px;font-size:12px;line-height:16px;color:#333;font-weight:400;letter-spacing:-0.1px;white-space:nowrap;left:-180.0px;width:800px;text-align:center;">00:02:25</div>
<div style="left:261px;top:700px;width:85px;height:26px;background:#e1f2fd;"></div>
<div style="left:300px;top:708px;width:7px;height:12px;"><svg width="7" height="12" viewBox="0 0 7 12" style="display:block"><path d="M3.5 2.5 V12" stroke="#6262bc" stroke-width="0.95"/><path d="M0.8 3.2 L3.5 0.2 L6.2 3.2 Z" fill="#3c3c9c"/></svg></div>
<div style="left:347px;top:700px;width:126px;height:26px;background:#e1f2fd;"></div>
<div style="top:704.84px;font-size:12px;line-height:16px;color:#333;font-weight:400;letter-spacing:-0.1px;white-space:nowrap;left:-333.5px;width:800px;text-align:right;">0</div>
<div style="left:474px;top:700px;width:126px;height:26px;background:#e1f2fd;"></div>
<div style="top:704.84px;font-size:12px;line-height:16px;color:#333;font-weight:400;letter-spacing:-0.1px;white-space:nowrap;left:-206.5px;width:800px;text-align:right;">0</div>
<div style="left:601px;top:700px;width:138px;height:26px;background:#e1f2fd;"></div>
<div style="top:704.84px;font-size:12px;line-height:16px;color:#333;font-weight:400;letter-spacing:-0.1px;white-space:nowrap;left:-67.5px;width:800px;text-align:right;">0</div>
<div style="left:740px;top:700px;width:56px;height:26px;background:#e1f2fd;"></div>
<div style="top:704.84px;font-size:12px;line-height:16px;color:#333;font-weight:400;letter-spacing:-0.1px;white-space:nowrap;left:-10.5px;width:800px;text-align:right;">0.076</div>
<div style="left:797px;top:700px;width:56px;height:26px;background:#e1f2fd;"></div>
<div style="top:704.84px;font-size:12px;line-height:16px;color:#333;font-weight:400;letter-spacing:-0.1px;white-space:nowrap;left:46.5px;width:800px;text-align:right;">0.064</div>
<div style="left:854px;top:700px;width:57px;height:26px;background:#e1f2fd;"></div>
<div style="top:704.84px;font-size:12px;line-height:16px;color:#333;font-weight:400;letter-spacing:-0.1px;white-space:nowrap;left:104.5px;width:800px;text-align:right;">0.089</div>
<div style="left:912px;top:700px;width:65px;height:26px;background:#e1f2fd;"></div>
<div style="top:704.84px;font-size:12px;line-height:16px;color:#333;font-weight:400;letter-spacing:-0.1px;white-space:nowrap;left:170.5px;width:800px;text-align:right;">42.847</div>
<div style="left:978px;top:700px;width:65px;height:26px;background:#e1f2fd;"></div>
<div style="top:704.84px;font-size:12px;line-height:16px;color:#333;font-weight:400;letter-spacing:-0.1px;white-space:nowrap;left:236.5px;width:800px;text-align:right;">31.81</div>
<div style="left:1044px;top:700px;width:74px;height:26px;background:#e1f2fd;"></div>
<div style="top:704.84px;font-size:12px;line-height:16px;color:#333;font-weight:400;letter-spacing:-0.1px;white-space:nowrap;left:311.5px;width:800px;text-align:right;">110.022</div>
<div style="left:1119px;top:700px;width:98px;height:26px;background:#e1f2fd;"></div>
<div style="top:704.84px;font-size:12px;line-height:16px;color:#333;font-weight:400;letter-spacing:-0.1px;white-space:nowrap;left:410.5px;width:800px;text-align:right;">540,578</div>
<div style="left:1218px;top:700px;width:99px;height:26px;background:#e1f2fd;"></div>
<div style="top:704.84px;font-size:12px;line-height:16px;color:#333;font-weight:400;letter-spacing:-0.1px;white-space:nowrap;left:510.5px;width:800px;text-align:right;">540,578</div>
<div style="left:1318px;top:700px;width:103px;height:26px;background:#e1f2fd;"></div>
<div style="top:704.84px;font-size:12px;line-height:16px;color:#333;font-weight:400;letter-spacing:-0.1px;white-space:nowrap;left:614.5px;width:800px;text-align:right;">781,249,828</div>
<div style="left:261px;top:727px;width:85px;height:26px;background:#fff1e0;"></div>
<div style="left:300px;top:735px;width:7px;height:12px;"><svg width="7" height="12" viewBox="0 0 7 12" style="display:block"><path d="M3.5 0 V9.5" stroke="#d9664c" stroke-width="0.95"/><path d="M0.8 8.8 L3.5 11.8 L6.2 8.8 Z" fill="#d2461e"/></svg></div>
<div style="left:347px;top:727px;width:126px;height:26px;background:#fff1e0;"></div>
<div style="top:731.84px;font-size:12px;line-height:16px;color:#333;font-weight:400;letter-spacing:-0.1px;white-space:nowrap;left:-333.5px;width:800px;text-align:right;">0</div>
<div style="left:474px;top:727px;width:126px;height:26px;background:#fff1e0;"></div>
<div style="top:731.84px;font-size:12px;line-height:16px;color:#333;font-weight:400;letter-spacing:-0.1px;white-space:nowrap;left:-206.5px;width:800px;text-align:right;">0</div>
<div style="left:601px;top:727px;width:138px;height:26px;background:#fff1e0;"></div>
<div style="top:731.84px;font-size:12px;line-height:16px;color:#333;font-weight:400;letter-spacing:-0.1px;white-space:nowrap;left:-67.5px;width:800px;text-align:right;">0</div>
<div style="left:740px;top:727px;width:56px;height:26px;background:#fff1e0;"></div>
<div style="top:731.84px;font-size:12px;line-height:16px;color:#333;font-weight:400;letter-spacing:-0.1px;white-space:nowrap;left:-10.5px;width:800px;text-align:right;">0.077</div>
<div style="left:797px;top:727px;width:56px;height:26px;background:#fff1e0;"></div>
<div style="top:731.84px;font-size:12px;line-height:16px;color:#333;font-weight:400;letter-spacing:-0.1px;white-space:nowrap;left:46.5px;width:800px;text-align:right;">0.021</div>
<div style="left:854px;top:727px;width:57px;height:26px;background:#fff1e0;"></div>
<div style="top:731.84px;font-size:12px;line-height:16px;color:#333;font-weight:400;letter-spacing:-0.1px;white-space:nowrap;left:104.5px;width:800px;text-align:right;">0.089</div>
<div style="left:912px;top:727px;width:65px;height:26px;background:#fff1e0;"></div>
<div style="top:731.84px;font-size:12px;line-height:16px;color:#333;font-weight:400;letter-spacing:-0.1px;white-space:nowrap;left:170.5px;width:800px;text-align:right;">42.832</div>
<div style="left:978px;top:727px;width:65px;height:26px;background:#fff1e0;"></div>
<div style="top:731.84px;font-size:12px;line-height:16px;color:#333;font-weight:400;letter-spacing:-0.1px;white-space:nowrap;left:236.5px;width:800px;text-align:right;">38.746</div>
<div style="left:1044px;top:727px;width:74px;height:26px;background:#fff1e0;"></div>
<div style="top:731.84px;font-size:12px;line-height:16px;color:#333;font-weight:400;letter-spacing:-0.1px;white-space:nowrap;left:311.5px;width:800px;text-align:right;">123.85</div>
<div style="left:1119px;top:727px;width:98px;height:26px;background:#fff1e0;"></div>
<div style="top:731.84px;font-size:12px;line-height:16px;color:#333;font-weight:400;letter-spacing:-0.1px;white-space:nowrap;left:410.5px;width:800px;text-align:right;">553,971</div>
<div style="left:1218px;top:727px;width:99px;height:26px;background:#fff1e0;"></div>
<div style="top:731.84px;font-size:12px;line-height:16px;color:#333;font-weight:400;letter-spacing:-0.1px;white-space:nowrap;left:510.5px;width:800px;text-align:right;">553,971</div>
<div style="left:1318px;top:727px;width:103px;height:26px;background:#fff1e0;"></div>
<div style="top:731.84px;font-size:12px;line-height:16px;color:#333;font-weight:400;letter-spacing:-0.1px;white-space:nowrap;left:614.5px;width:800px;text-align:right;">781,249,828</div>
<div style="left:75px;top:754px;width:104px;height:55px;background:#f4f4f4;"></div>
<div style="left:181px;top:754px;width:78px;height:55px;background:#f4f4f4;"></div>
<div style="top:774.14px;font-size:12px;line-height:16px;color:#333;font-weight:400;letter-spacing:-0.1px;white-space:nowrap;left:-273.0px;width:800px;text-align:center;">#10</div>
<div style="top:774.14px;font-size:12px;line-height:16px;color:#333;font-weight:400;letter-spacing:-0.1px;white-space:nowrap;left:-180.0px;width:800px;text-align:center;">00:02:25</div>
<div style="left:261px;top:754px;width:85px;height:26px;background:#e1f2fd;"></div>
<div style="left:300px;top:762px;width:7px;height:12px;"><svg width="7" height="12" viewBox="0 0 7 12" style="display:block"><path d="M3.5 2.5 V12" stroke="#6262bc" stroke-width="0.95"/><path d="M0.8 3.2 L3.5 0.2 L6.2 3.2 Z" fill="#3c3c9c"/></svg></div>
<div style="left:347px;top:754px;width:126px;height:26px;background:#e1f2fd;"></div>
<div style="top:758.84px;font-size:12px;line-height:16px;color:#333;font-weight:400;letter-spacing:-0.1px;white-space:nowrap;left:-333.5px;width:800px;text-align:right;">0</div>
<div style="left:474px;top:754px;width:126px;height:26px;background:#e1f2fd;"></div>
<div style="top:758.84px;font-size:12px;line-height:16px;color:#333;font-weight:400;letter-spacing:-0.1px;white-space:nowrap;left:-206.5px;width:800px;text-align:right;">0</div>
<div style="left:601px;top:754px;width:138px;height:26px;background:#e1f2fd;"></div>
<div style="top:758.84px;font-size:12px;line-height:16px;color:#333;font-weight:400;letter-spacing:-0.1px;white-space:nowrap;left:-67.5px;width:800px;text-align:right;">0</div>
<div style="left:740px;top:754px;width:56px;height:26px;background:#e1f2fd;"></div>
<div style="top:758.84px;font-size:12px;line-height:16px;color:#333;font-weight:400;letter-spacing:-0.1px;white-space:nowrap;left:-10.5px;width:800px;text-align:right;">0.076</div>
<div style="left:797px;top:754px;width:56px;height:26px;background:#e1f2fd;"></div>
<div style="top:758.84px;font-size:12px;line-height:16px;color:#333;font-weight:400;letter-spacing:-0.1px;white-space:nowrap;left:46.5px;width:800px;text-align:right;">0.053</div>
<div style="left:854px;top:754px;width:57px;height:26px;background:#e1f2fd;"></div>
<div style="top:758.84px;font-size:12px;line-height:16px;color:#333;font-weight:400;letter-spacing:-0.1px;white-space:nowrap;left:104.5px;width:800px;text-align:right;">0.089</div>
<div style="left:912px;top:754px;width:65px;height:26px;background:#e1f2fd;"></div>
<div style="top:758.84px;font-size:12px;line-height:16px;color:#333;font-weight:400;letter-spacing:-0.1px;white-space:nowrap;left:170.5px;width:800px;text-align:right;">42.847</div>
<div style="left:978px;top:754px;width:65px;height:26px;background:#e1f2fd;"></div>
<div style="top:758.84px;font-size:12px;line-height:16px;color:#333;font-weight:400;letter-spacing:-0.1px;white-space:nowrap;left:236.5px;width:800px;text-align:right;">31.81</div>
<div style="left:1044px;top:754px;width:74px;height:26px;background:#e1f2fd;"></div>
<div style="top:758.84px;font-size:12px;line-height:16px;color:#333;font-weight:400;letter-spacing:-0.1px;white-space:nowrap;left:311.5px;width:800px;text-align:right;">110.033</div>
<div style="left:1119px;top:754px;width:98px;height:26px;background:#e1f2fd;"></div>
<div style="top:758.84px;font-size:12px;line-height:16px;color:#333;font-weight:400;letter-spacing:-0.1px;white-space:nowrap;left:410.5px;width:800px;text-align:right;">540,581</div>
<div style="left:1218px;top:754px;width:99px;height:26px;background:#e1f2fd;"></div>
<div style="top:758.84px;font-size:12px;line-height:16px;color:#333;font-weight:400;letter-spacing:-0.1px;white-space:nowrap;left:510.5px;width:800px;text-align:right;">540,581</div>
<div style="left:1318px;top:754px;width:103px;height:26px;background:#e1f2fd;"></div>
<div style="top:758.84px;font-size:12px;line-height:16px;color:#333;font-weight:400;letter-spacing:-0.1px;white-space:nowrap;left:614.5px;width:800px;text-align:right;">781,249,828</div>
<div style="left:261px;top:781px;width:85px;height:28px;background:#fff1e0;"></div>
<div style="left:300px;top:789px;width:7px;height:12px;"><svg width="7" height="12" viewBox="0 0 7 12" style="display:block"><path d="M3.5 0 V9.5" stroke="#d9664c" stroke-width="0.95"/><path d="M0.8 8.8 L3.5 11.8 L6.2 8.8 Z" fill="#d2461e"/></svg></div>
<div style="left:347px;top:781px;width:126px;height:28px;background:#fff1e0;"></div>
<div style="top:785.84px;font-size:12px;line-height:16px;color:#333;font-weight:400;letter-spacing:-0.1px;white-space:nowrap;left:-333.5px;width:800px;text-align:right;">0</div>
<div style="left:474px;top:781px;width:126px;height:28px;background:#fff1e0;"></div>
<div style="top:785.84px;font-size:12px;line-height:16px;color:#333;font-weight:400;letter-spacing:-0.1px;white-space:nowrap;left:-206.5px;width:800px;text-align:right;">0</div>
<div style="left:601px;top:781px;width:138px;height:28px;background:#fff1e0;"></div>
<div style="top:785.84px;font-size:12px;line-height:16px;color:#333;font-weight:400;letter-spacing:-0.1px;white-space:nowrap;left:-67.5px;width:800px;text-align:right;">0</div>
<div style="left:740px;top:781px;width:56px;height:28px;background:#fff1e0;"></div>
<div style="top:785.84px;font-size:12px;line-height:16px;color:#333;font-weight:400;letter-spacing:-0.1px;white-space:nowrap;left:-10.5px;width:800px;text-align:right;">0.077</div>
<div style="left:797px;top:781px;width:56px;height:28px;background:#fff1e0;"></div>
<div style="top:785.84px;font-size:12px;line-height:16px;color:#333;font-weight:400;letter-spacing:-0.1px;white-space:nowrap;left:46.5px;width:800px;text-align:right;">0.021</div>
<div style="left:854px;top:781px;width:57px;height:28px;background:#fff1e0;"></div>
<div style="top:785.84px;font-size:12px;line-height:16px;color:#333;font-weight:400;letter-spacing:-0.1px;white-space:nowrap;left:104.5px;width:800px;text-align:right;">0.089</div>
<div style="left:912px;top:781px;width:65px;height:28px;background:#fff1e0;"></div>
<div style="top:785.84px;font-size:12px;line-height:16px;color:#333;font-weight:400;letter-spacing:-0.1px;white-space:nowrap;left:170.5px;width:800px;text-align:right;">42.832</div>
<div style="left:978px;top:781px;width:65px;height:28px;background:#fff1e0;"></div>
<div style="top:785.84px;font-size:12px;line-height:16px;color:#333;font-weight:400;letter-spacing:-0.1px;white-space:nowrap;left:236.5px;width:800px;text-align:right;">38.746</div>
<div style="left:1044px;top:781px;width:74px;height:28px;background:#fff1e0;"></div>
<div style="top:785.84px;font-size:12px;line-height:16px;color:#333;font-weight:400;letter-spacing:-0.1px;white-space:nowrap;left:311.5px;width:800px;text-align:right;">123.861</div>
<div style="left:1119px;top:781px;width:98px;height:28px;background:#fff1e0;"></div>
<div style="top:785.84px;font-size:12px;line-height:16px;color:#333;font-weight:400;letter-spacing:-0.1px;white-space:nowrap;left:410.5px;width:800px;text-align:right;">553,859</div>
<div style="left:1218px;top:781px;width:99px;height:28px;background:#fff1e0;"></div>
<div style="top:785.84px;font-size:12px;line-height:16px;color:#333;font-weight:400;letter-spacing:-0.1px;white-space:nowrap;left:510.5px;width:800px;text-align:right;">553,859</div>
<div style="left:1318px;top:781px;width:103px;height:28px;background:#fff1e0;"></div>
<div style="top:785.84px;font-size:12px;line-height:16px;color:#333;font-weight:400;letter-spacing:-0.1px;white-space:nowrap;left:614.5px;width:800px;text-align:right;">781,249,828</div>
<div style="left:75px;top:810px;width:104px;height:53px;background:#f4f4f4;"></div>
<div style="left:181px;top:810px;width:78px;height:53px;background:#f4f4f4;"></div>
<div style="top:829.14px;font-size:12px;line-height:16px;color:#333;font-weight:400;letter-spacing:-0.1px;white-space:nowrap;left:-273.0px;width:800px;text-align:center;">#11</div>
<div style="top:829.14px;font-size:12px;line-height:16px;color:#333;font-weight:400;letter-spacing:-0.1px;white-space:nowrap;left:-180.0px;width:800px;text-align:center;">00:02:25</div>
<div style="left:261px;top:810px;width:85px;height:26px;background:#e1f2fd;"></div>
<div style="left:300px;top:818px;width:7px;height:12px;"><svg width="7" height="12" viewBox="0 0 7 12" style="display:block"><path d="M3.5 2.5 V12" stroke="#6262bc" stroke-width="0.95"/><path d="M0.8 3.2 L3.5 0.2 L6.2 3.2 Z" fill="#3c3c9c"/></svg></div>
<div style="left:347px;top:810px;width:126px;height:26px;background:#e1f2fd;"></div>
<div style="top:814.84px;font-size:12px;line-height:16px;color:#333;font-weight:400;letter-spacing:-0.1px;white-space:nowrap;left:-333.5px;width:800px;text-align:right;">0</div>
<div style="left:474px;top:810px;width:126px;height:26px;background:#e1f2fd;"></div>
<div style="top:814.84px;font-size:12px;line-height:16px;color:#333;font-weight:400;letter-spacing:-0.1px;white-space:nowrap;left:-206.5px;width:800px;text-align:right;">0</div>
<div style="left:601px;top:810px;width:138px;height:26px;background:#e1f2fd;"></div>
<div style="top:814.84px;font-size:12px;line-height:16px;color:#333;font-weight:400;letter-spacing:-0.1px;white-space:nowrap;left:-67.5px;width:800px;text-align:right;">0</div>
<div style="left:740px;top:810px;width:56px;height:26px;background:#e1f2fd;"></div>
<div style="top:814.84px;font-size:12px;line-height:16px;color:#333;font-weight:400;letter-spacing:-0.1px;white-space:nowrap;left:-10.5px;width:800px;text-align:right;">0.076</div>
<div style="left:797px;top:810px;width:56px;height:26px;background:#e1f2fd;"></div>
<div style="top:814.84px;font-size:12px;line-height:16px;color:#333;font-weight:400;letter-spacing:-0.1px;white-space:nowrap;left:46.5px;width:800px;text-align:right;">0.064</div>
<div style="left:854px;top:810px;width:57px;height:26px;background:#e1f2fd;"></div>
<div style="top:814.84px;font-size:12px;line-height:16px;color:#333;font-weight:400;letter-spacing:-0.1px;white-space:nowrap;left:104.5px;width:800px;text-align:right;">0.089</div>
<div style="left:912px;top:810px;width:65px;height:26px;background:#e1f2fd;"></div>
<div style="top:814.84px;font-size:12px;line-height:16px;color:#333;font-weight:400;letter-spacing:-0.1px;white-space:nowrap;left:170.5px;width:800px;text-align:right;">42.847</div>
<div style="left:978px;top:810px;width:65px;height:26px;background:#e1f2fd;"></div>
<div style="top:814.84px;font-size:12px;line-height:16px;color:#333;font-weight:400;letter-spacing:-0.1px;white-space:nowrap;left:236.5px;width:800px;text-align:right;">31.811</div>
<div style="left:1044px;top:810px;width:74px;height:26px;background:#e1f2fd;"></div>
<div style="top:814.84px;font-size:12px;line-height:16px;color:#333;font-weight:400;letter-spacing:-0.1px;white-space:nowrap;left:311.5px;width:800px;text-align:right;">110.054</div>
<div style="left:1119px;top:810px;width:98px;height:26px;background:#e1f2fd;"></div>
<div style="top:814.84px;font-size:12px;line-height:16px;color:#333;font-weight:400;letter-spacing:-0.1px;white-space:nowrap;left:410.5px;width:800px;text-align:right;">540,576</div>
<div style="left:1218px;top:810px;width:99px;height:26px;background:#e1f2fd;"></div>
<div style="top:814.84px;font-size:12px;line-height:16px;color:#333;font-weight:400;letter-spacing:-0.1px;white-space:nowrap;left:510.5px;width:800px;text-align:right;">540,576</div>
<div style="left:1318px;top:810px;width:103px;height:26px;background:#e1f2fd;"></div>
<div style="top:814.84px;font-size:12px;line-height:16px;color:#333;font-weight:400;letter-spacing:-0.1px;white-space:nowrap;left:614.5px;width:800px;text-align:right;">781,249,828</div>
<div style="left:261px;top:837px;width:85px;height:26px;background:#fff1e0;"></div>
<div style="left:300px;top:845px;width:7px;height:12px;"><svg width="7" height="12" viewBox="0 0 7 12" style="display:block"><path d="M3.5 0 V9.5" stroke="#d9664c" stroke-width="0.95"/><path d="M0.8 8.8 L3.5 11.8 L6.2 8.8 Z" fill="#d2461e"/></svg></div>
<div style="left:347px;top:837px;width:126px;height:26px;background:#fff1e0;"></div>
<div style="top:841.84px;font-size:12px;line-height:16px;color:#333;font-weight:400;letter-spacing:-0.1px;white-space:nowrap;left:-333.5px;width:800px;text-align:right;">0</div>
<div style="left:474px;top:837px;width:126px;height:26px;background:#fff1e0;"></div>
<div style="top:841.84px;font-size:12px;line-height:16px;color:#333;font-weight:400;letter-spacing:-0.1px;white-space:nowrap;left:-206.5px;width:800px;text-align:right;">0</div>
<div style="left:601px;top:837px;width:138px;height:26px;background:#fff1e0;"></div>
<div style="top:841.84px;font-size:12px;line-height:16px;color:#333;font-weight:400;letter-spacing:-0.1px;white-space:nowrap;left:-67.5px;width:800px;text-align:right;">0</div>
<div style="left:740px;top:837px;width:56px;height:26px;background:#fff1e0;"></div>
<div style="top:841.84px;font-size:12px;line-height:16px;color:#333;font-weight:400;letter-spacing:-0.1px;white-space:nowrap;left:-10.5px;width:800px;text-align:right;">0.077</div>
<div style="left:797px;top:837px;width:56px;height:26px;background:#fff1e0;"></div>
<div style="top:841.84px;font-size:12px;line-height:16px;color:#333;font-weight:400;letter-spacing:-0.1px;white-space:nowrap;left:46.5px;width:800px;text-align:right;">0.021</div>
<div style="left:854px;top:837px;width:57px;height:26px;background:#fff1e0;"></div>
<div style="top:841.84px;font-size:12px;line-height:16px;color:#333;font-weight:400;letter-spacing:-0.1px;white-space:nowrap;left:104.5px;width:800px;text-align:right;">0.089</div>
<div style="left:912px;top:837px;width:65px;height:26px;background:#fff1e0;"></div>
<div style="top:841.84px;font-size:12px;line-height:16px;color:#333;font-weight:400;letter-spacing:-0.1px;white-space:nowrap;left:170.5px;width:800px;text-align:right;">42.832</div>
<div style="left:978px;top:837px;width:65px;height:26px;background:#fff1e0;"></div>
<div style="top:841.84px;font-size:12px;line-height:16px;color:#333;font-weight:400;letter-spacing:-0.1px;white-space:nowrap;left:236.5px;width:800px;text-align:right;">41.04</div>
<div style="left:1044px;top:837px;width:74px;height:26px;background:#fff1e0;"></div>
<div style="top:841.84px;font-size:12px;line-height:16px;color:#333;font-weight:400;letter-spacing:-0.1px;white-space:nowrap;left:311.5px;width:800px;text-align:right;">123.872</div>
<div style="left:1119px;top:837px;width:98px;height:26px;background:#fff1e0;"></div>
<div style="top:841.84px;font-size:12px;line-height:16px;color:#333;font-weight:400;letter-spacing:-0.1px;white-space:nowrap;left:410.5px;width:800px;text-align:right;">553,992</div>
<div style="left:1218px;top:837px;width:99px;height:26px;background:#fff1e0;"></div>
<div style="top:841.84px;font-size:12px;line-height:16px;color:#333;font-weight:400;letter-spacing:-0.1px;white-space:nowrap;left:510.5px;width:800px;text-align:right;">553,992</div>
<div style="left:1318px;top:837px;width:103px;height:26px;background:#fff1e0;"></div>
<div style="top:841.84px;font-size:12px;line-height:16px;color:#333;font-weight:400;letter-spacing:-0.1px;white-space:nowrap;left:614.5px;width:800px;text-align:right;">781,249,828</div>
<div style="left:75px;top:864px;width:104px;height:53px;background:#f4f4f4;"></div>
<div style="left:181px;top:864px;width:78px;height:53px;background:#f4f4f4;"></div>
<div style="top:883.14px;font-size:12px;line-height:16px;color:#333;font-weight:400;letter-spacing:-0.1px;white-space:nowrap;left:-273.0px;width:800px;text-align:center;">#12</div>
<div style="top:883.14px;font-size:12px;line-height:16px;color:#333;font-weight:400;letter-spacing:-0.1px;white-space:nowrap;left:-180.0px;width:800px;text-align:center;">00:02:25</div>
<div style="left:261px;top:864px;width:85px;height:26px;background:#e1f2fd;"></div>
<div style="left:300px;top:872px;width:7px;height:12px;"><svg width="7" height="12" viewBox="0 0 7 12" style="display:block"><path d="M3.5 2.5 V12" stroke="#6262bc" stroke-width="0.95"/><path d="M0.8 3.2 L3.5 0.2 L6.2 3.2 Z" fill="#3c3c9c"/></svg></div>
<div style="left:347px;top:864px;width:126px;height:26px;background:#e1f2fd;"></div>
<div style="top:868.84px;font-size:12px;line-height:16px;color:#333;font-weight:400;letter-spacing:-0.1px;white-space:nowrap;left:-333.5px;width:800px;text-align:right;">0</div>
<div style="left:474px;top:864px;width:126px;height:26px;background:#e1f2fd;"></div>
<div style="top:868.84px;font-size:12px;line-height:16px;color:#333;font-weight:400;letter-spacing:-0.1px;white-space:nowrap;left:-206.5px;width:800px;text-align:right;">0</div>
<div style="left:601px;top:864px;width:138px;height:26px;background:#e1f2fd;"></div>
<div style="top:868.84px;font-size:12px;line-height:16px;color:#333;font-weight:400;letter-spacing:-0.1px;white-space:nowrap;left:-67.5px;width:800px;text-align:right;">0</div>
<div style="left:740px;top:864px;width:56px;height:26px;background:#e1f2fd;"></div>
<div style="top:868.84px;font-size:12px;line-height:16px;color:#333;font-weight:400;letter-spacing:-0.1px;white-space:nowrap;left:-10.5px;width:800px;text-align:right;">0.076</div>
<div style="left:797px;top:864px;width:56px;height:26px;background:#e1f2fd;"></div>
<div style="top:868.84px;font-size:12px;line-height:16px;color:#333;font-weight:400;letter-spacing:-0.1px;white-space:nowrap;left:46.5px;width:800px;text-align:right;">0.064</div>
<div style="left:854px;top:864px;width:57px;height:26px;background:#e1f2fd;"></div>
<div style="top:868.84px;font-size:12px;line-height:16px;color:#333;font-weight:400;letter-spacing:-0.1px;white-space:nowrap;left:104.5px;width:800px;text-align:right;">0.089</div>
<div style="left:912px;top:864px;width:65px;height:26px;background:#e1f2fd;"></div>
<div style="top:868.84px;font-size:12px;line-height:16px;color:#333;font-weight:400;letter-spacing:-0.1px;white-space:nowrap;left:170.5px;width:800px;text-align:right;">42.847</div>
<div style="left:978px;top:864px;width:65px;height:26px;background:#e1f2fd;"></div>
<div style="top:868.84px;font-size:12px;line-height:16px;color:#333;font-weight:400;letter-spacing:-0.1px;white-space:nowrap;left:236.5px;width:800px;text-align:right;">31.812</div>
<div style="left:1044px;top:864px;width:74px;height:26px;background:#e1f2fd;"></div>
<div style="top:868.84px;font-size:12px;line-height:16px;color:#333;font-weight:400;letter-spacing:-0.1px;white-space:nowrap;left:311.5px;width:800px;text-align:right;">110.065</div>
<div style="left:1119px;top:864px;width:98px;height:26px;background:#e1f2fd;"></div>
<div style="top:868.84px;font-size:12px;line-height:16px;color:#333;font-weight:400;letter-spacing:-0.1px;white-space:nowrap;left:410.5px;width:800px;text-align:right;">540,606</div>
<div style="left:1218px;top:864px;width:99px;height:26px;background:#e1f2fd;"></div>
<div style="top:868.84px;font-size:12px;line-height:16px;color:#333;font-weight:400;letter-spacing:-0.1px;white-space:nowrap;left:510.5px;width:800px;text-align:right;">540,606</div>
<div style="left:1318px;top:864px;width:103px;height:26px;background:#e1f2fd;"></div>
<div style="top:868.84px;font-size:12px;line-height:16px;color:#333;font-weight:400;letter-spacing:-0.1px;white-space:nowrap;left:614.5px;width:800px;text-align:right;">781,249,828</div>
<div style="left:261px;top:891px;width:85px;height:26px;background:#fff1e0;"></div>
<div style="left:300px;top:899px;width:7px;height:12px;"><svg width="7" height="12" viewBox="0 0 7 12" style="display:block"><path d="M3.5 0 V9.5" stroke="#d9664c" stroke-width="0.95"/><path d="M0.8 8.8 L3.5 11.8 L6.2 8.8 Z" fill="#d2461e"/></svg></div>
<div style="left:347px;top:891px;width:126px;height:26px;background:#fff1e0;"></div>
<div style="top:895.84px;font-size:12px;line-height:16px;color:#333;font-weight:400;letter-spacing:-0.1px;white-space:nowrap;left:-333.5px;width:800px;text-align:right;">0</div>
<div style="left:474px;top:891px;width:126px;height:26px;background:#fff1e0;"></div>
<div style="top:895.84px;font-size:12px;line-height:16px;color:#333;font-weight:400;letter-spacing:-0.1px;white-space:nowrap;left:-206.5px;width:800px;text-align:right;">0</div>
<div style="left:601px;top:891px;width:138px;height:26px;background:#fff1e0;"></div>
<div style="top:895.84px;font-size:12px;line-height:16px;color:#333;font-weight:400;letter-spacing:-0.1px;white-space:nowrap;left:-67.5px;width:800px;text-align:right;">0</div>
<div style="left:740px;top:891px;width:56px;height:26px;background:#fff1e0;"></div>
<div style="top:895.84px;font-size:12px;line-height:16px;color:#333;font-weight:400;letter-spacing:-0.1px;white-space:nowrap;left:-10.5px;width:800px;text-align:right;">0.077</div>
<div style="left:797px;top:891px;width:56px;height:26px;background:#fff1e0;"></div>
<div style="top:895.84px;font-size:12px;line-height:16px;color:#333;font-weight:400;letter-spacing:-0.1px;white-space:nowrap;left:46.5px;width:800px;text-align:right;">0.021</div>
<div style="left:854px;top:891px;width:57px;height:26px;background:#fff1e0;"></div>
<div style="top:895.84px;font-size:12px;line-height:16px;color:#333;font-weight:400;letter-spacing:-0.1px;white-space:nowrap;left:104.5px;width:800px;text-align:right;">0.089</div>
<div style="left:912px;top:891px;width:65px;height:26px;background:#fff1e0;"></div>
<div style="top:895.84px;font-size:12px;line-height:16px;color:#333;font-weight:400;letter-spacing:-0.1px;white-space:nowrap;left:170.5px;width:800px;text-align:right;">42.832</div>
<div style="left:978px;top:891px;width:65px;height:26px;background:#fff1e0;"></div>
<div style="top:895.84px;font-size:12px;line-height:16px;color:#333;font-weight:400;letter-spacing:-0.1px;white-space:nowrap;left:236.5px;width:800px;text-align:right;">41.04</div>
<div style="left:1044px;top:891px;width:74px;height:26px;background:#fff1e0;"></div>
<div style="top:895.84px;font-size:12px;line-height:16px;color:#333;font-weight:400;letter-spacing:-0.1px;white-space:nowrap;left:311.5px;width:800px;text-align:right;">123.893</div>
<div style="left:1119px;top:891px;width:98px;height:26px;background:#fff1e0;"></div>
<div style="top:895.84px;font-size:12px;line-height:16px;color:#333;font-weight:400;letter-spacing:-0.1px;white-space:nowrap;left:410.5px;width:800px;text-align:right;">553,860</div>
<div style="left:1218px;top:891px;width:99px;height:26px;background:#fff1e0;"></div>
<div style="top:895.84px;font-size:12px;line-height:16px;color:#333;font-weight:400;letter-spacing:-0.1px;white-space:nowrap;left:510.5px;width:800px;text-align:right;">553,860</div>
<div style="left:1318px;top:891px;width:103px;height:26px;background:#fff1e0;"></div>
<div style="top:895.84px;font-size:12px;line-height:16px;color:#333;font-weight:400;letter-spacing:-0.1px;white-space:nowrap;left:614.5px;width:800px;text-align:right;">781,249,828</div>
<div style="left:75px;top:918px;width:104px;height:53px;background:#f4f4f4;"></div>
<div style="left:181px;top:918px;width:78px;height:53px;background:#f4f4f4;"></div>
<div style="top:937.14px;font-size:12px;line-height:16px;color:#333;font-weight:400;letter-spacing:-0.1px;white-space:nowrap;left:-273.0px;width:800px;text-align:center;">#13</div>
<div style="top:937.14px;font-size:12px;line-height:16px;color:#333;font-weight:400;letter-spacing:-0.1px;white-space:nowrap;left:-180.0px;width:800px;text-align:center;">00:02:25</div>
<div style="left:261px;top:918px;width:85px;height:26px;background:#e1f2fd;"></div>
<div style="left:300px;top:926px;width:7px;height:12px;"><svg width="7" height="12" viewBox="0 0 7 12" style="display:block"><path d="M3.5 2.5 V12" stroke="#6262bc" stroke-width="0.95"/><path d="M0.8 3.2 L3.5 0.2 L6.2 3.2 Z" fill="#3c3c9c"/></svg></div>
<div style="left:347px;top:918px;width:126px;height:26px;background:#e1f2fd;"></div>
<div style="top:922.84px;font-size:12px;line-height:16px;color:#333;font-weight:400;letter-spacing:-0.1px;white-space:nowrap;left:-333.5px;width:800px;text-align:right;">0</div>
<div style="left:474px;top:918px;width:126px;height:26px;background:#e1f2fd;"></div>
<div style="top:922.84px;font-size:12px;line-height:16px;color:#333;font-weight:400;letter-spacing:-0.1px;white-space:nowrap;left:-206.5px;width:800px;text-align:right;">0</div>
<div style="left:601px;top:918px;width:138px;height:26px;background:#e1f2fd;"></div>
<div style="top:922.84px;font-size:12px;line-height:16px;color:#333;font-weight:400;letter-spacing:-0.1px;white-space:nowrap;left:-67.5px;width:800px;text-align:right;">0</div>
<div style="left:740px;top:918px;width:56px;height:26px;background:#e1f2fd;"></div>
<div style="top:922.84px;font-size:12px;line-height:16px;color:#333;font-weight:400;letter-spacing:-0.1px;white-space:nowrap;left:-10.5px;width:800px;text-align:right;">0.076</div>
<div style="left:797px;top:918px;width:56px;height:26px;background:#e1f2fd;"></div>
<div style="top:922.84px;font-size:12px;line-height:16px;color:#333;font-weight:400;letter-spacing:-0.1px;white-space:nowrap;left:46.5px;width:800px;text-align:right;">0.064</div>
<div style="left:854px;top:918px;width:57px;height:26px;background:#e1f2fd;"></div>
<div style="top:922.84px;font-size:12px;line-height:16px;color:#333;font-weight:400;letter-spacing:-0.1px;white-space:nowrap;left:104.5px;width:800px;text-align:right;">0.089</div>
<div style="left:912px;top:918px;width:65px;height:26px;background:#e1f2fd;"></div>
<div style="top:922.84px;font-size:12px;line-height:16px;color:#333;font-weight:400;letter-spacing:-0.1px;white-space:nowrap;left:170.5px;width:800px;text-align:right;">42.847</div>
<div style="left:978px;top:918px;width:65px;height:26px;background:#e1f2fd;"></div>
<div style="top:922.84px;font-size:12px;line-height:16px;color:#333;font-weight:400;letter-spacing:-0.1px;white-space:nowrap;left:236.5px;width:800px;text-align:right;">31.812</div>
<div style="left:1044px;top:918px;width:74px;height:26px;background:#e1f2fd;"></div>
<div style="top:922.84px;font-size:12px;line-height:16px;color:#333;font-weight:400;letter-spacing:-0.1px;white-space:nowrap;left:311.5px;width:800px;text-align:right;">110.076</div>
<div style="left:1119px;top:918px;width:98px;height:26px;background:#e1f2fd;"></div>
<div style="top:922.84px;font-size:12px;line-height:16px;color:#333;font-weight:400;letter-spacing:-0.1px;white-space:nowrap;left:410.5px;width:800px;text-align:right;">540,555</div>
<div style="left:1218px;top:918px;width:99px;height:26px;background:#e1f2fd;"></div>
<div style="top:922.84px;font-size:12px;line-height:16px;color:#333;font-weight:400;letter-spacing:-0.1px;white-space:nowrap;left:510.5px;width:800px;text-align:right;">540,555</div>
<div style="left:1318px;top:918px;width:103px;height:26px;background:#e1f2fd;"></div>
<div style="top:922.84px;font-size:12px;line-height:16px;color:#333;font-weight:400;letter-spacing:-0.1px;white-space:nowrap;left:614.5px;width:800px;text-align:right;">781,249,828</div>
<div style="left:261px;top:945px;width:85px;height:26px;background:#fff1e0;"></div>
<div style="left:300px;top:953px;width:7px;height:12px;"><svg width="7" height="12" viewBox="0 0 7 12" style="display:block"><path d="M3.5 0 V9.5" stroke="#d9664c" stroke-width="0.95"/><path d="M0.8 8.8 L3.5 11.8 L6.2 8.8 Z" fill="#d2461e"/></svg></div>
<div style="left:347px;top:945px;width:126px;height:26px;background:#fff1e0;"></div>
<div style="top:949.84px;font-size:12px;line-height:16px;color:#333;font-weight:400;letter-spacing:-0.1px;white-space:nowrap;left:-333.5px;width:800px;text-align:right;">0</div>
<div style="left:474px;top:945px;width:126px;height:26px;background:#fff1e0;"></div>
<div style="top:949.84px;font-size:12px;line-height:16px;color:#333;font-weight:400;letter-spacing:-0.1px;white-space:nowrap;left:-206.5px;width:800px;text-align:right;">0</div>
<div style="left:601px;top:945px;width:138px;height:26px;background:#fff1e0;"></div>
<div style="top:949.84px;font-size:12px;line-height:16px;color:#333;font-weight:400;letter-spacing:-0.1px;white-space:nowrap;left:-67.5px;width:800px;text-align:right;">0</div>
<div style="left:740px;top:945px;width:56px;height:26px;background:#fff1e0;"></div>
<div style="top:949.84px;font-size:12px;line-height:16px;color:#333;font-weight:400;letter-spacing:-0.1px;white-space:nowrap;left:-10.5px;width:800px;text-align:right;">0.077</div>
<div style="left:797px;top:945px;width:56px;height:26px;background:#fff1e0;"></div>
<div style="top:949.84px;font-size:12px;line-height:16px;color:#333;font-weight:400;letter-spacing:-0.1px;white-space:nowrap;left:46.5px;width:800px;text-align:right;">0.021</div>
<div style="left:854px;top:945px;width:57px;height:26px;background:#fff1e0;"></div>
<div style="top:949.84px;font-size:12px;line-height:16px;color:#333;font-weight:400;letter-spacing:-0.1px;white-space:nowrap;left:104.5px;width:800px;text-align:right;">0.089</div>
<div style="left:912px;top:945px;width:65px;height:26px;background:#fff1e0;"></div>
<div style="top:949.84px;font-size:12px;line-height:16px;color:#333;font-weight:400;letter-spacing:-0.1px;white-space:nowrap;left:170.5px;width:800px;text-align:right;">42.832</div>
<div style="left:978px;top:945px;width:65px;height:26px;background:#fff1e0;"></div>
<div style="top:949.84px;font-size:12px;line-height:16px;color:#333;font-weight:400;letter-spacing:-0.1px;white-space:nowrap;left:236.5px;width:800px;text-align:right;">42.567</div>
<div style="left:1044px;top:945px;width:74px;height:26px;background:#fff1e0;"></div>
<div style="top:949.84px;font-size:12px;line-height:16px;color:#333;font-weight:400;letter-spacing:-0.1px;white-space:nowrap;left:311.5px;width:800px;text-align:right;">123.904</div>
<div style="left:1119px;top:945px;width:98px;height:26px;background:#fff1e0;"></div>
<div style="top:949.84px;font-size:12px;line-height:16px;color:#333;font-weight:400;letter-spacing:-0.1px;white-space:nowrap;left:410.5px;width:800px;text-align:right;">554,053</div>
<div style="left:1218px;top:945px;width:99px;height:26px;background:#fff1e0;"></div>
<div style="top:949.84px;font-size:12px;line-height:16px;color:#333;font-weight:400;letter-spacing:-0.1px;white-space:nowrap;left:510.5px;width:800px;text-align:right;">554,053</div>
<div style="left:1318px;top:945px;width:103px;height:26px;background:#fff1e0;"></div>
<div style="top:949.84px;font-size:12px;line-height:16px;color:#333;font-weight:400;letter-spacing:-0.1px;white-space:nowrap;left:614.5px;width:800px;text-align:right;">781,249,828</div>
<div style="left:75px;top:972px;width:104px;height:53px;background:#f4f4f4;"></div>
<div style="left:181px;top:972px;width:78px;height:53px;background:#f4f4f4;"></div>
<div style="top:991.14px;font-size:12px;line-height:16px;color:#333;font-weight:400;letter-spacing:-0.1px;white-space:nowrap;left:-273.0px;width:800px;text-align:center;">#14</div>
<div style="top:991.14px;font-size:12px;line-height:16px;color:#333;font-weight:400;letter-spacing:-0.1px;white-space:nowrap;left:-180.0px;width:800px;text-align:center;">00:02:25</div>
<div style="left:261px;top:972px;width:85px;height:26px;background:#e1f2fd;"></div>
<div style="left:300px;top:980px;width:7px;height:12px;"><svg width="7" height="12" viewBox="0 0 7 12" style="display:block"><path d="M3.5 2.5 V12" stroke="#6262bc" stroke-width="0.95"/><path d="M0.8 3.2 L3.5 0.2 L6.2 3.2 Z" fill="#3c3c9c"/></svg></div>
<div style="left:347px;top:972px;width:126px;height:26px;background:#e1f2fd;"></div>
<div style="top:976.84px;font-size:12px;line-height:16px;color:#333;font-weight:400;letter-spacing:-0.1px;white-space:nowrap;left:-333.5px;width:800px;text-align:right;">0</div>
<div style="left:474px;top:972px;width:126px;height:26px;background:#e1f2fd;"></div>
<div style="top:976.84px;font-size:12px;line-height:16px;color:#333;font-weight:400;letter-spacing:-0.1px;white-space:nowrap;left:-206.5px;width:800px;text-align:right;">0</div>
<div style="left:601px;top:972px;width:138px;height:26px;background:#e1f2fd;"></div>
<div style="top:976.84px;font-size:12px;line-height:16px;color:#333;font-weight:400;letter-spacing:-0.1px;white-space:nowrap;left:-67.5px;width:800px;text-align:right;">0</div>
<div style="left:740px;top:972px;width:56px;height:26px;background:#e1f2fd;"></div>
<div style="top:976.84px;font-size:12px;line-height:16px;color:#333;font-weight:400;letter-spacing:-0.1px;white-space:nowrap;left:-10.5px;width:800px;text-align:right;">0.076</div>
<div style="left:797px;top:972px;width:56px;height:26px;background:#e1f2fd;"></div>
<div style="top:976.84px;font-size:12px;line-height:16px;color:#333;font-weight:400;letter-spacing:-0.1px;white-space:nowrap;left:46.5px;width:800px;text-align:right;">0.064</div>
<div style="left:854px;top:972px;width:57px;height:26px;background:#e1f2fd;"></div>
<div style="top:976.84px;font-size:12px;line-height:16px;color:#333;font-weight:400;letter-spacing:-0.1px;white-space:nowrap;left:104.5px;width:800px;text-align:right;">0.089</div>
<div style="left:912px;top:972px;width:65px;height:26px;background:#e1f2fd;"></div>
<div style="top:976.84px;font-size:12px;line-height:16px;color:#333;font-weight:400;letter-spacing:-0.1px;white-space:nowrap;left:170.5px;width:800px;text-align:right;">42.847</div>
<div style="left:978px;top:972px;width:65px;height:26px;background:#e1f2fd;"></div>
<div style="top:976.84px;font-size:12px;line-height:16px;color:#333;font-weight:400;letter-spacing:-0.1px;white-space:nowrap;left:236.5px;width:800px;text-align:right;">31.812</div>
<div style="left:1044px;top:972px;width:74px;height:26px;background:#e1f2fd;"></div>
<div style="top:976.84px;font-size:12px;line-height:16px;color:#333;font-weight:400;letter-spacing:-0.1px;white-space:nowrap;left:311.5px;width:800px;text-align:right;">110.087</div>
<div style="left:1119px;top:972px;width:98px;height:26px;background:#e1f2fd;"></div>
<div style="top:976.84px;font-size:12px;line-height:16px;color:#333;font-weight:400;letter-spacing:-0.1px;white-space:nowrap;left:410.5px;width:800px;text-align:right;">540,588</div>
<div style="left:1218px;top:972px;width:99px;height:26px;background:#e1f2fd;"></div>
<div style="top:976.84px;font-size:12px;line-height:16px;color:#333;font-weight:400;letter-spacing:-0.1px;white-space:nowrap;left:510.5px;width:800px;text-align:right;">540,588</div>
<div style="left:1318px;top:972px;width:103px;height:26px;background:#e1f2fd;"></div>
<div style="top:976.84px;font-size:12px;line-height:16px;color:#333;font-weight:400;letter-spacing:-0.1px;white-space:nowrap;left:614.5px;width:800px;text-align:right;">781,249,828</div>
<div style="left:261px;top:999px;width:85px;height:26px;background:#fff1e0;"></div>
<div style="left:300px;top:1007px;width:7px;height:12px;"><svg width="7" height="12" viewBox="0 0 7 12" style="display:block"><path d="M3.5 0 V9.5" stroke="#d9664c" stroke-width="0.95"/><path d="M0.8 8.8 L3.5 11.8 L6.2 8.8 Z" fill="#d2461e"/></svg></div>
<div style="left:347px;top:999px;width:126px;height:26px;background:#fff1e0;"></div>
<div style="top:1003.84px;font-size:12px;line-height:16px;color:#333;font-weight:400;letter-spacing:-0.1px;white-space:nowrap;left:-333.5px;width:800px;text-align:right;">0</div>
<div style="left:474px;top:999px;width:126px;height:26px;background:#fff1e0;"></div>
<div style="top:1003.84px;font-size:12px;line-height:16px;color:#333;font-weight:400;letter-spacing:-0.1px;white-space:nowrap;left:-206.5px;width:800px;text-align:right;">0</div>
<div style="left:601px;top:999px;width:138px;height:26px;background:#fff1e0;"></div>
<div style="top:1003.84px;font-size:12px;line-height:16px;color:#333;font-weight:400;letter-spacing:-0.1px;white-space:nowrap;left:-67.5px;width:800px;text-align:right;">0</div>
<div style="left:740px;top:999px;width:56px;height:26px;background:#fff1e0;"></div>
<div style="top:1003.84px;font-size:12px;line-height:16px;color:#333;font-weight:400;letter-spacing:-0.1px;white-space:nowrap;left:-10.5px;width:800px;text-align:right;">0.077</div>
<div style="left:797px;top:999px;width:56px;height:26px;background:#fff1e0;"></div>
<div style="top:1003.84px;font-size:12px;line-height:16px;color:#333;font-weight:400;letter-spacing:-0.1px;white-space:nowrap;left:46.5px;width:800px;text-align:right;">0.021</div>
<div style="left:854px;top:999px;width:57px;height:26px;background:#fff1e0;"></div>
<div style="top:1003.84px;font-size:12px;line-height:16px;color:#333;font-weight:400;letter-spacing:-0.1px;white-space:nowrap;left:104.5px;width:800px;text-align:right;">0.089</div>
<div style="left:912px;top:999px;width:65px;height:26px;background:#fff1e0;"></div>
<div style="top:1003.84px;font-size:12px;line-height:16px;color:#333;font-weight:400;letter-spacing:-0.1px;white-space:nowrap;left:170.5px;width:800px;text-align:right;">42.832</div>
<div style="left:978px;top:999px;width:65px;height:26px;background:#fff1e0;"></div>
<div style="top:1003.84px;font-size:12px;line-height:16px;color:#333;font-weight:400;letter-spacing:-0.1px;white-space:nowrap;left:236.5px;width:800px;text-align:right;">42.691</div>
<div style="left:1044px;top:999px;width:74px;height:26px;background:#fff1e0;"></div>
<div style="top:1003.84px;font-size:12px;line-height:16px;color:#333;font-weight:400;letter-spacing:-0.1px;white-space:nowrap;left:311.5px;width:800px;text-align:right;">123.915</div>
<div style="left:1119px;top:999px;width:98px;height:26px;background:#fff1e0;"></div>
<div style="top:1003.84px;font-size:12px;line-height:16px;color:#333;font-weight:400;letter-spacing:-0.1px;white-space:nowrap;left:410.5px;width:800px;text-align:right;">553,957</div>
<div style="left:1218px;top:999px;width:99px;height:26px;background:#fff1e0;"></div>
<div style="top:1003.84px;font-size:12px;line-height:16px;color:#333;font-weight:400;letter-spacing:-0.1px;white-space:nowrap;left:510.5px;width:800px;text-align:right;">553,957</div>
<div style="left:1318px;top:999px;width:103px;height:26px;background:#fff1e0;"></div>
<div style="top:1003.84px;font-size:12px;line-height:16px;color:#333;font-weight:400;letter-spacing:-0.1px;white-space:nowrap;left:614.5px;width:800px;text-align:right;">781,249,828</div>
<div style="left:75px;top:1026px;width:104px;height:53px;background:#f4f4f4;"></div>
<div style="left:181px;top:1026px;width:78px;height:53px;background:#f4f4f4;"></div>
<div style="top:1045.14px;font-size:12px;line-height:16px;color:#333;font-weight:400;letter-spacing:-0.1px;white-space:nowrap;left:-273.0px;width:800px;text-align:center;">#15</div>
<div style="top:1045.14px;font-size:12px;line-height:16px;color:#333;font-weight:400;letter-spacing:-0.1px;white-space:nowrap;left:-180.0px;width:800px;text-align:center;">00:02:25</div>
<div style="left:261px;top:1026px;width:85px;height:26px;background:#e1f2fd;"></div>
<div style="left:300px;top:1034px;width:7px;height:12px;"><svg width="7" height="12" viewBox="0 0 7 12" style="display:block"><path d="M3.5 2.5 V12" stroke="#6262bc" stroke-width="0.95"/><path d="M0.8 3.2 L3.5 0.2 L6.2 3.2 Z" fill="#3c3c9c"/></svg></div>
<div style="left:347px;top:1026px;width:126px;height:26px;background:#e1f2fd;"></div>
<div style="top:1030.84px;font-size:12px;line-height:16px;color:#333;font-weight:400;letter-spacing:-0.1px;white-space:nowrap;left:-333.5px;width:800px;text-align:right;">0</div>
<div style="left:474px;top:1026px;width:126px;height:26px;background:#e1f2fd;"></div>
<div style="top:1030.84px;font-size:12px;line-height:16px;color:#333;font-weight:400;letter-spacing:-0.1px;white-space:nowrap;left:-206.5px;width:800px;text-align:right;">0</div>
<div style="left:601px;top:1026px;width:138px;height:26px;background:#e1f2fd;"></div>
<div style="top:1030.84px;font-size:12px;line-height:16px;color:#333;font-weight:400;letter-spacing:-0.1px;white-space:nowrap;left:-67.5px;width:800px;text-align:right;">0</div>
<div style="left:740px;top:1026px;width:56px;height:26px;background:#e1f2fd;"></div>
<div style="top:1030.84px;font-size:12px;line-height:16px;color:#333;font-weight:400;letter-spacing:-0.1px;white-space:nowrap;left:-10.5px;width:800px;text-align:right;">0.076</div>
<div style="left:797px;top:1026px;width:56px;height:26px;background:#e1f2fd;"></div>
<div style="top:1030.84px;font-size:12px;line-height:16px;color:#333;font-weight:400;letter-spacing:-0.1px;white-space:nowrap;left:46.5px;width:800px;text-align:right;">0.065</div>
<div style="left:854px;top:1026px;width:57px;height:26px;background:#e1f2fd;"></div>
<div style="top:1030.84px;font-size:12px;line-height:16px;color:#333;font-weight:400;letter-spacing:-0.1px;white-space:nowrap;left:104.5px;width:800px;text-align:right;">0.089</div>
<div style="left:912px;top:1026px;width:65px;height:26px;background:#e1f2fd;"></div>
<div style="top:1030.84px;font-size:12px;line-height:16px;color:#333;font-weight:400;letter-spacing:-0.1px;white-space:nowrap;left:170.5px;width:800px;text-align:right;">42.847</div>
<div style="left:978px;top:1026px;width:65px;height:26px;background:#e1f2fd;"></div>
<div style="top:1030.84px;font-size:12px;line-height:16px;color:#333;font-weight:400;letter-spacing:-0.1px;white-space:nowrap;left:236.5px;width:800px;text-align:right;">31.813</div>
<div style="left:1044px;top:1026px;width:74px;height:26px;background:#e1f2fd;"></div>
<div style="top:1030.84px;font-size:12px;line-height:16px;color:#333;font-weight:400;letter-spacing:-0.1px;white-space:nowrap;left:311.5px;width:800px;text-align:right;">110.097</div>
<div style="left:1119px;top:1026px;width:98px;height:26px;background:#e1f2fd;"></div>
<div style="top:1030.84px;font-size:12px;line-height:16px;color:#333;font-weight:400;letter-spacing:-0.1px;white-space:nowrap;left:410.5px;width:800px;text-align:right;">540,551</div>
<div style="left:1218px;top:1026px;width:99px;height:26px;background:#e1f2fd;"></div>
<div style="top:1030.84px;font-size:12px;line-height:16px;color:#333;font-weight:400;letter-spacing:-0.1px;white-space:nowrap;left:510.5px;width:800px;text-align:right;">540,551</div>
<div style="left:1318px;top:1026px;width:103px;height:26px;background:#e1f2fd;"></div>
<div style="top:1030.84px;font-size:12px;line-height:16px;color:#333;font-weight:400;letter-spacing:-0.1px;white-space:nowrap;left:614.5px;width:800px;text-align:right;">781,249,828</div>
<div style="left:261px;top:1053px;width:85px;height:26px;background:#fff1e0;"></div>
<div style="left:300px;top:1061px;width:7px;height:12px;"><svg width="7" height="12" viewBox="0 0 7 12" style="display:block"><path d="M3.5 0 V9.5" stroke="#d9664c" stroke-width="0.95"/><path d="M0.8 8.8 L3.5 11.8 L6.2 8.8 Z" fill="#d2461e"/></svg></div>
<div style="left:347px;top:1053px;width:126px;height:26px;background:#fff1e0;"></div>
<div style="top:1057.84px;font-size:12px;line-height:16px;color:#333;font-weight:400;letter-spacing:-0.1px;white-space:nowrap;left:-333.5px;width:800px;text-align:right;">0</div>
<div style="left:474px;top:1053px;width:126px;height:26px;background:#fff1e0;"></div>
<div style="top:1057.84px;font-size:12px;line-height:16px;color:#333;font-weight:400;letter-spacing:-0.1px;white-space:nowrap;left:-206.5px;width:800px;text-align:right;">0</div>
<div style="left:601px;top:1053px;width:138px;height:26px;background:#fff1e0;"></div>
<div style="top:1057.84px;font-size:12px;line-height:16px;color:#333;font-weight:400;letter-spacing:-0.1px;white-space:nowrap;left:-67.5px;width:800px;text-align:right;">0</div>
<div style="left:740px;top:1053px;width:56px;height:26px;background:#fff1e0;"></div>
<div style="top:1057.84px;font-size:12px;line-height:16px;color:#333;font-weight:400;letter-spacing:-0.1px;white-space:nowrap;left:-10.5px;width:800px;text-align:right;">0.077</div>
<div style="left:797px;top:1053px;width:56px;height:26px;background:#fff1e0;"></div>
<div style="top:1057.84px;font-size:12px;line-height:16px;color:#333;font-weight:400;letter-spacing:-0.1px;white-space:nowrap;left:46.5px;width:800px;text-align:right;">0.021</div>
<div style="left:854px;top:1053px;width:57px;height:26px;background:#fff1e0;"></div>
<div style="top:1057.84px;font-size:12px;line-height:16px;color:#333;font-weight:400;letter-spacing:-0.1px;white-space:nowrap;left:104.5px;width:800px;text-align:right;">0.089</div>
<div style="left:912px;top:1053px;width:65px;height:26px;background:#fff1e0;"></div>
<div style="top:1057.84px;font-size:12px;line-height:16px;color:#333;font-weight:400;letter-spacing:-0.1px;white-space:nowrap;left:170.5px;width:800px;text-align:right;">42.832</div>
<div style="left:978px;top:1053px;width:65px;height:26px;background:#fff1e0;"></div>
<div style="top:1057.84px;font-size:12px;line-height:16px;color:#333;font-weight:400;letter-spacing:-0.1px;white-space:nowrap;left:236.5px;width:800px;text-align:right;">42.832</div>
<div style="left:1044px;top:1053px;width:74px;height:26px;background:#fff1e0;"></div>
<div style="top:1057.84px;font-size:12px;line-height:16px;color:#333;font-weight:400;letter-spacing:-0.1px;white-space:nowrap;left:311.5px;width:800px;text-align:right;">123.936</div>
<div style="left:1119px;top:1053px;width:98px;height:26px;background:#fff1e0;"></div>
<div style="top:1057.84px;font-size:12px;line-height:16px;color:#333;font-weight:400;letter-spacing:-0.1px;white-space:nowrap;left:410.5px;width:800px;text-align:right;">554,009</div>
<div style="left:1218px;top:1053px;width:99px;height:26px;background:#fff1e0;"></div>
<div style="top:1057.84px;font-size:12px;line-height:16px;color:#333;font-weight:400;letter-spacing:-0.1px;white-space:nowrap;left:510.5px;width:800px;text-align:right;">554,009</div>
<div style="left:1318px;top:1053px;width:103px;height:26px;background:#fff1e0;"></div>
<div style="top:1057.84px;font-size:12px;line-height:16px;color:#333;font-weight:400;letter-spacing:-0.1px;white-space:nowrap;left:614.5px;width:800px;text-align:right;">781,249,828</div>
<div style="left:75px;top:1080px;width:104px;height:53px;background:#f4f4f4;"></div>
<div style="left:181px;top:1080px;width:78px;height:53px;background:#f4f4f4;"></div>
<div style="top:1099.14px;font-size:12px;line-height:16px;color:#333;font-weight:400;letter-spacing:-0.1px;white-space:nowrap;left:-273.0px;width:800px;text-align:center;">#16</div>
<div style="top:1099.14px;font-size:12px;line-height:16px;color:#333;font-weight:400;letter-spacing:-0.1px;white-space:nowrap;left:-180.0px;width:800px;text-align:center;">00:02:25</div>
<div style="left:261px;top:1080px;width:85px;height:26px;background:#e1f2fd;"></div>
<div style="left:300px;top:1088px;width:7px;height:12px;"><svg width="7" height="12" viewBox="0 0 7 12" style="display:block"><path d="M3.5 2.5 V12" stroke="#6262bc" stroke-width="0.95"/><path d="M0.8 3.2 L3.5 0.2 L6.2 3.2 Z" fill="#3c3c9c"/></svg></div>
<div style="left:347px;top:1080px;width:126px;height:26px;background:#e1f2fd;"></div>
<div style="top:1084.84px;font-size:12px;line-height:16px;color:#333;font-weight:400;letter-spacing:-0.1px;white-space:nowrap;left:-333.5px;width:800px;text-align:right;">0</div>
<div style="left:474px;top:1080px;width:126px;height:26px;background:#e1f2fd;"></div>
<div style="top:1084.84px;font-size:12px;line-height:16px;color:#333;font-weight:400;letter-spacing:-0.1px;white-space:nowrap;left:-206.5px;width:800px;text-align:right;">0</div>
<div style="left:601px;top:1080px;width:138px;height:26px;background:#e1f2fd;"></div>
<div style="top:1084.84px;font-size:12px;line-height:16px;color:#333;font-weight:400;letter-spacing:-0.1px;white-space:nowrap;left:-67.5px;width:800px;text-align:right;">0</div>
<div style="left:740px;top:1080px;width:56px;height:26px;background:#e1f2fd;"></div>
<div style="top:1084.84px;font-size:12px;line-height:16px;color:#333;font-weight:400;letter-spacing:-0.1px;white-space:nowrap;left:-10.5px;width:800px;text-align:right;">0.076</div>
<div style="left:797px;top:1080px;width:56px;height:26px;background:#e1f2fd;"></div>
<div style="top:1084.84px;font-size:12px;line-height:16px;color:#333;font-weight:400;letter-spacing:-0.1px;white-space:nowrap;left:46.5px;width:800px;text-align:right;">0.064</div>
<div style="left:854px;top:1080px;width:57px;height:26px;background:#e1f2fd;"></div>
<div style="top:1084.84px;font-size:12px;line-height:16px;color:#333;font-weight:400;letter-spacing:-0.1px;white-space:nowrap;left:104.5px;width:800px;text-align:right;">0.089</div>
<div style="left:912px;top:1080px;width:65px;height:26px;background:#e1f2fd;"></div>
<div style="top:1084.84px;font-size:12px;line-height:16px;color:#333;font-weight:400;letter-spacing:-0.1px;white-space:nowrap;left:170.5px;width:800px;text-align:right;">42.847</div>
<div style="left:978px;top:1080px;width:65px;height:26px;background:#e1f2fd;"></div>
<div style="top:1084.84px;font-size:12px;line-height:16px;color:#333;font-weight:400;letter-spacing:-0.1px;white-space:nowrap;left:236.5px;width:800px;text-align:right;">31.813</div>
<div style="left:1044px;top:1080px;width:74px;height:26px;background:#e1f2fd;"></div>
<div style="top:1084.84px;font-size:12px;line-height:16px;color:#333;font-weight:400;letter-spacing:-0.1px;white-space:nowrap;left:311.5px;width:800px;text-align:right;">110.108</div>
<div style="left:1119px;top:1080px;width:98px;height:26px;background:#e1f2fd;"></div>
<div style="top:1084.84px;font-size:12px;line-height:16px;color:#333;font-weight:400;letter-spacing:-0.1px;white-space:nowrap;left:410.5px;width:800px;text-align:right;">540,940</div>
<div style="left:1218px;top:1080px;width:99px;height:26px;background:#e1f2fd;"></div>
<div style="top:1084.84px;font-size:12px;line-height:16px;color:#333;font-weight:400;letter-spacing:-0.1px;white-space:nowrap;left:510.5px;width:800px;text-align:right;">540,940</div>
<div style="left:1318px;top:1080px;width:103px;height:26px;background:#e1f2fd;"></div>
<div style="top:1084.84px;font-size:12px;line-height:16px;color:#333;font-weight:400;letter-spacing:-0.1px;white-space:nowrap;left:614.5px;width:800px;text-align:right;">781,249,828</div>
<div style="left:261px;top:1107px;width:85px;height:26px;background:#fff1e0;"></div>
<div style="left:300px;top:1115px;width:7px;height:12px;"><svg width="7" height="12" viewBox="0 0 7 12" style="display:block"><path d="M3.5 0 V9.5" stroke="#d9664c" stroke-width="0.95"/><path d="M0.8 8.8 L3.5 11.8 L6.2 8.8 Z" fill="#d2461e"/></svg></div>
<div style="left:347px;top:1107px;width:126px;height:26px;background:#fff1e0;"></div>
<div style="top:1111.84px;font-size:12px;line-height:16px;color:#333;font-weight:400;letter-spacing:-0.1px;white-space:nowrap;left:-333.5px;width:800px;text-align:right;">0</div>
<div style="left:474px;top:1107px;width:126px;height:26px;background:#fff1e0;"></div>
<div style="top:1111.84px;font-size:12px;line-height:16px;color:#333;font-weight:400;letter-spacing:-0.1px;white-space:nowrap;left:-206.5px;width:800px;text-align:right;">0</div>
<div style="left:601px;top:1107px;width:138px;height:26px;background:#fff1e0;"></div>
<div style="top:1111.84px;font-size:12px;line-height:16px;color:#333;font-weight:400;letter-spacing:-0.1px;white-space:nowrap;left:-67.5px;width:800px;text-align:right;">0</div>
<div style="left:740px;top:1107px;width:56px;height:26px;background:#fff1e0;"></div>
<div style="top:1111.84px;font-size:12px;line-height:16px;color:#333;font-weight:400;letter-spacing:-0.1px;white-space:nowrap;left:-10.5px;width:800px;text-align:right;">0.077</div>
<div style="left:797px;top:1107px;width:56px;height:26px;background:#fff1e0;"></div>
<div style="top:1111.84px;font-size:12px;line-height:16px;color:#333;font-weight:400;letter-spacing:-0.1px;white-space:nowrap;left:46.5px;width:800px;text-align:right;">0.021</div>
<div style="left:854px;top:1107px;width:57px;height:26px;background:#fff1e0;"></div>
<div style="top:1111.84px;font-size:12px;line-height:16px;color:#333;font-weight:400;letter-spacing:-0.1px;white-space:nowrap;left:104.5px;width:800px;text-align:right;">0.089</div>
<div style="left:912px;top:1107px;width:65px;height:26px;background:#fff1e0;"></div>
<div style="top:1111.84px;font-size:12px;line-height:16px;color:#333;font-weight:400;letter-spacing:-0.1px;white-space:nowrap;left:170.5px;width:800px;text-align:right;">42.832</div>
<div style="left:978px;top:1107px;width:65px;height:26px;background:#fff1e0;"></div>
<div style="top:1111.84px;font-size:12px;line-height:16px;color:#333;font-weight:400;letter-spacing:-0.1px;white-space:nowrap;left:236.5px;width:800px;text-align:right;">42.832</div>
<div style="left:1044px;top:1107px;width:74px;height:26px;background:#fff1e0;"></div>
<div style="top:1111.84px;font-size:12px;line-height:16px;color:#333;font-weight:400;letter-spacing:-0.1px;white-space:nowrap;left:311.5px;width:800px;text-align:right;">123.947</div>
<div style="left:1119px;top:1107px;width:98px;height:26px;background:#fff1e0;"></div>
<div style="top:1111.84px;font-size:12px;line-height:16px;color:#333;font-weight:400;letter-spacing:-0.1px;white-space:nowrap;left:410.5px;width:800px;text-align:right;">561,141</div>
<div style="left:1218px;top:1107px;width:99px;height:26px;background:#fff1e0;"></div>
<div style="top:1111.84px;font-size:12px;line-height:16px;color:#333;font-weight:400;letter-spacing:-0.1px;white-space:nowrap;left:510.5px;width:800px;text-align:right;">561,141</div>
<div style="left:1318px;top:1107px;width:103px;height:26px;background:#fff1e0;"></div>
<div style="top:1111.84px;font-size:12px;line-height:16px;color:#333;font-weight:400;letter-spacing:-0.1px;white-space:nowrap;left:614.5px;width:800px;text-align:right;">781,249,828</div>
<div style="left:346px;top:268px;width:1px;height:865px;background:#e2e0e2;"></div>
<div style="left:473px;top:268px;width:1px;height:865px;background:#e2e0e2;"></div>
<div style="left:600px;top:268px;width:1px;height:865px;background:#e2e0e2;"></div>
<div style="left:739px;top:268px;width:1px;height:865px;background:#e2e0e2;"></div>
<div style="left:796px;top:268px;width:1px;height:865px;background:#e2e0e2;"></div>
<div style="left:853px;top:268px;width:1px;height:865px;background:#e2e0e2;"></div>
<div style="left:911px;top:268px;width:1px;height:865px;background:#e2e0e2;"></div>
<div style="left:977px;top:268px;width:1px;height:865px;background:#e2e0e2;"></div>
<div style="left:1043px;top:268px;width:1px;height:865px;background:#e2e0e2;"></div>
<div style="left:1118px;top:268px;width:1px;height:865px;background:#e2e0e2;"></div>
<div style="left:1217px;top:268px;width:1px;height:865px;background:#e2e0e2;"></div>
<div style="left:1317px;top:268px;width:1px;height:865px;background:#e2e0e2;"></div>
<div style="left:179px;top:268px;width:2px;height:865px;background:#c9c9c9;"></div>
<div style="left:259px;top:268px;width:2px;height:865px;background:#c9c9c9;"></div>
<div style="left:73px;top:268px;width:2px;height:866px;background:#d8d8d8;"></div>
<div style="left:74px;top:1133px;width:1348px;height:1px;background:#cfcfcf;"></div>
</body></html>
